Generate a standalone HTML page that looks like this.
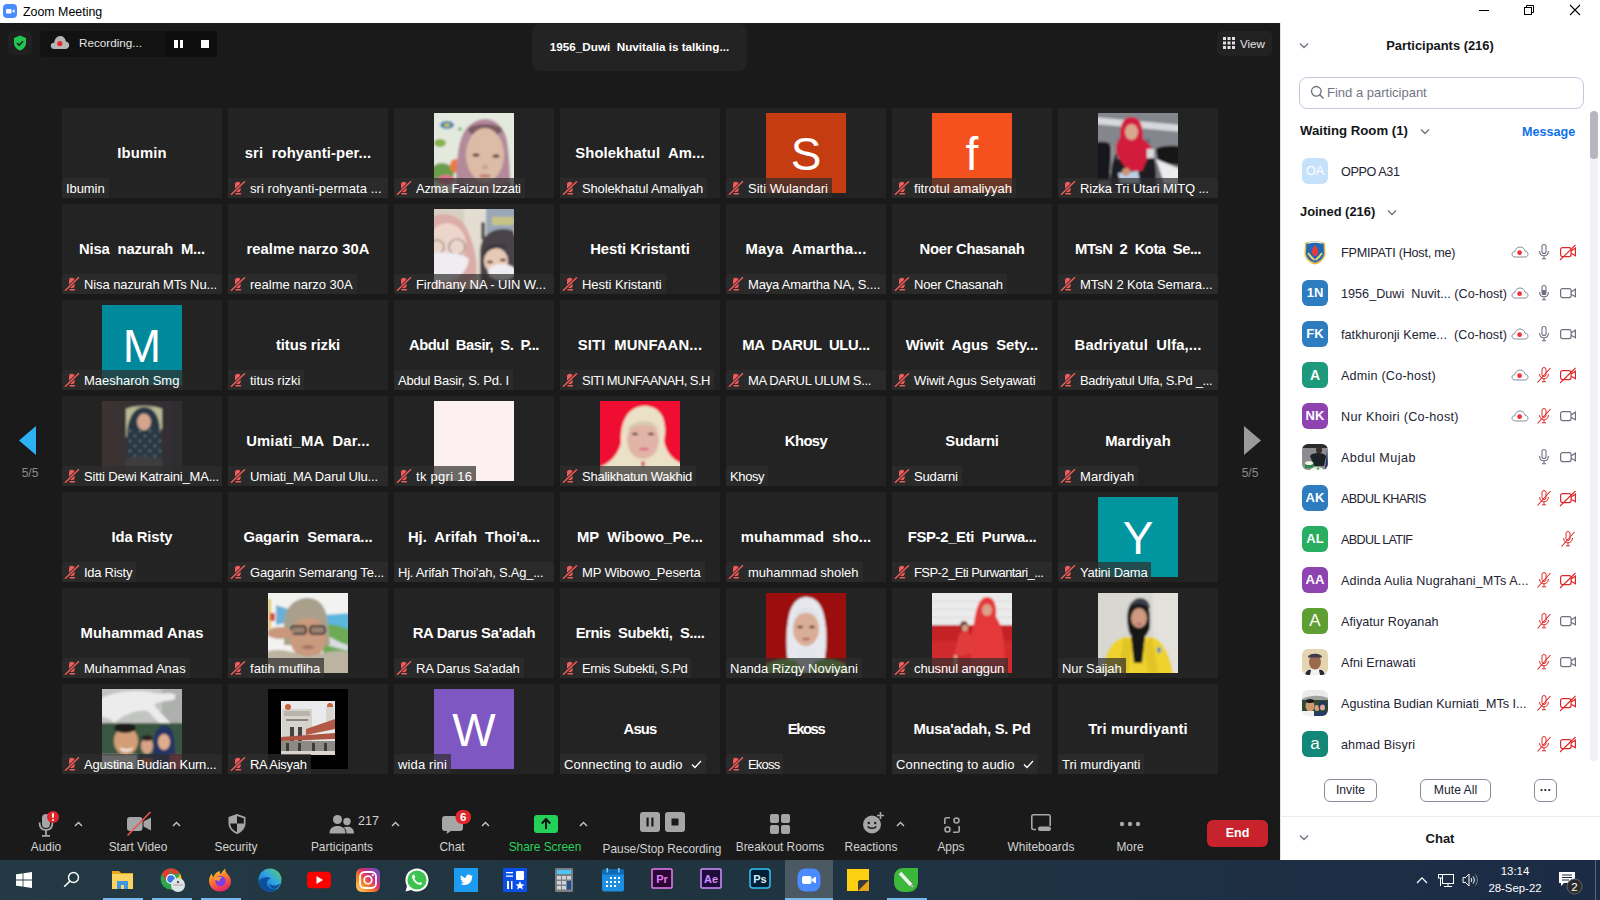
<!DOCTYPE html><html><head><meta charset="utf-8"><title>Zoom Meeting</title><style>
*{box-sizing:border-box;margin:0;padding:0}
html,body{width:1600px;height:900px;overflow:hidden;background:#1a1a1a;font-family:"Liberation Sans",sans-serif}
.a{position:absolute}
.tile{position:absolute;width:160px;height:90px;background:#232323;overflow:hidden}
.big{position:absolute;left:0;top:0;width:160px;height:90px;line-height:90px;text-align:center;color:#fff;font-weight:bold;font-size:14.8px;white-space:pre;letter-spacing:0}
.lbl{position:absolute;left:0;bottom:0;height:20px;background:rgba(46,46,46,0.7);color:#fff;font-size:13px;line-height:21px;white-space:pre;padding:0 4px 0 4px;max-width:160px;overflow:hidden}
.lbl.m{padding-left:22px}.lbl.f{width:160px}
.mic{position:absolute;left:0;top:0;width:24px;height:20px}
.av{position:absolute;left:40px;top:5px;width:80px;height:80px;color:#fff;text-align:center;font-size:46px;line-height:82px}
.ph{position:absolute;left:40px;top:5px;width:80px;height:80px;overflow:hidden;display:block}
.tb{position:absolute;color:#c9c9c9;font-size:11.9px;text-align:center;white-space:nowrap}
.pr{position:absolute;left:1300px;width:280px;height:41px}
.pav{position:absolute;left:2px;top:7px;width:26px;height:26px;border-radius:6px;color:#fff;font-weight:bold;font-size:14px;line-height:26px;text-align:center;overflow:hidden}
.pn{position:absolute;left:41px;top:0;line-height:41px;font-size:13.5px;color:#232333;white-space:nowrap}
.ti{position:absolute;top:0;width:49px;height:40px}
</style></head><body>
<div class="a" style="left:0;top:0;width:1600px;height:23px;background:#fff"></div>
<div class="a" style="left:3px;top:4px;width:14px;height:14px;border-radius:4px;background:#4a8cff"></div>
<svg class="a" style="left:3px;top:4px" width="14" height="14" viewBox="0 0 14 14"><rect x="3" y="5" width="5.5" height="4.5" rx="1" fill="#fff"/><path d="M9 7 L11.5 5.3 V9.2 Z" fill="#fff"/></svg>
<div class="a" style="left:23px;top:4px;font-size:12.4px;line-height:17px;color:#000">Zoom Meeting</div>
<div class="a" style="left:1479px;top:10px;width:10px;height:1px;background:#000"></div>
<svg class="a" style="left:1523px;top:4px" width="12" height="12" viewBox="0 0 12 12"><rect x="1.5" y="3.5" width="7" height="7" fill="none" stroke="#000"/><path d="M3.5 3.5 V1.5 H10.5 V8.5 H8.5" fill="none" stroke="#000"/></svg>
<svg class="a" style="left:1569px;top:4px" width="12" height="12" viewBox="0 0 12 12"><path d="M1 1 L11 11 M11 1 L1 11" stroke="#000" stroke-width="1.1"/></svg>
<div class="a" style="left:8px;top:31px;width:24px;height:24px;border-radius:5px;background:#202020"></div>
<svg class="a" style="left:13px;top:35px" width="14" height="16" viewBox="0 0 14 16"><path d="M7 0.5 L13 3 V8 C13 11.5 10.5 14 7 15.5 C3.5 14 1 11.5 1 8 V3 Z" fill="#23c552"/><path d="M4 8 L6.2 10.2 L10 6.3" stroke="#1a1a1a" stroke-width="1.6" fill="none"/></svg>
<div class="a" style="left:40px;top:31px;width:177px;height:26px;border-radius:4px;background:#121212"></div>
<svg class="a" style="left:50px;top:35px" width="20" height="15" viewBox="0 0 20 15"><path d="M4.5 14 C1.5 14 0.5 12 0.8 10.2 C1.2 8.3 3 7.6 4.2 7.8 C4.5 4 7 1 10.2 1 C13.5 1 15.6 3.6 15.9 6.6 C18 6.9 19.4 8.6 19.2 10.6 C19 12.6 17.5 14 15.4 14 Z" fill="#b5b5b5"/><circle cx="9.8" cy="8.5" r="2.6" fill="#e8262b"/></svg>
<div class="a" style="left:79px;top:34px;font-size:11.7px;line-height:18px;color:#e6e6e6">Recording...</div>
<div class="a" style="left:165px;top:31px;width:52px;height:26px;border-radius:0 4px 4px 0;background:#0e0e0e"></div>
<div class="a" style="left:174px;top:40px;width:3.5px;height:8px;background:#fff"></div><div class="a" style="left:179.5px;top:40px;width:3.5px;height:8px;background:#fff"></div>
<div class="a" style="left:201px;top:40px;width:8px;height:8px;background:#fff"></div>
<div class="a" style="left:532px;top:24px;width:215px;height:47px;border-radius:8px;background:#232323"></div>
<div class="a" style="left:532px;top:38px;width:215px;text-align:center;font-size:11.7px;font-weight:bold;line-height:18px;color:#fff">1956_Duwi&nbsp; Nuvitalia is talking...</div>
<div class="a" style="left:1217px;top:31px;width:55px;height:25px;border-radius:5px;background:#222"></div>
<svg class="a" style="left:1223px;top:37px" width="12" height="12" viewBox="0 0 12 12" fill="#e0e0e0"><rect x="0" y="0" width="3" height="3"/><rect x="4.5" y="0" width="3" height="3"/><rect x="9" y="0" width="3" height="3"/><rect x="0" y="4.5" width="3" height="3"/><rect x="4.5" y="4.5" width="3" height="3"/><rect x="9" y="4.5" width="3" height="3"/><rect x="0" y="9" width="3" height="3"/><rect x="4.5" y="9" width="3" height="3"/><rect x="9" y="9" width="3" height="3"/></svg>
<div class="a" style="left:1240px;top:35px;font-size:11.6px;line-height:18px;color:#e6e6e6">View</div>
<svg class="a" style="left:19px;top:426px" width="18" height="29" viewBox="0 0 18 29"><path d="M17 0 V29 L0 14.5 Z" fill="#2db2f6"/></svg>
<div class="a" style="left:14px;top:466px;width:32px;text-align:center;font-size:12px;line-height:14px;color:#8a8a8a">5/5</div>
<svg class="a" style="left:1244px;top:426px" width="18" height="29" viewBox="0 0 18 29"><path d="M0 0 V29 L17 14.5 Z" fill="#9a9a9a"/></svg>
<div class="a" style="left:1234px;top:466px;width:32px;text-align:center;font-size:12px;line-height:14px;color:#8a8a8a">5/5</div>
<div class="tile" style="left:62px;top:108px"><div class="big" style="letter-spacing:0.20px">Ibumin</div><div class="lbl"><span style="letter-spacing:-0.08px">Ibumin</span></div></div>
<div class="tile" style="left:228px;top:108px"><div class="big" style="letter-spacing:0.12px">sri  rohyanti-per...</div><div class="lbl m f"><svg class="mic" viewBox="0 0 24 20"><rect x="7" y="3.7" width="5.6" height="10.6" rx="2.8" fill="#f05a5a"/><rect x="7.2" y="15" width="6" height="1.6" rx=".8" fill="#f05a5a"/><path d="M3 16.7 L17 3.3" stroke="#2a2a2a" stroke-width="3"/><path d="M3 16.7 L17 3.3" stroke="#f05a5a" stroke-width="1.5"/></svg><span style="letter-spacing:0.07px">sri rohyanti-permata ...</span></div></div>
<div class="tile" style="left:394px;top:108px"><svg class="ph" viewBox="0 0 80 80" width="80" height="80"><defs><filter id="b1" x="-10%" y="-10%" width="120%" height="120%"><feGaussianBlur stdDeviation="1.1"/></filter><clipPath id="c1"><rect width="80" height="80"/></clipPath></defs><g clip-path="url(#c1)"><g filter="url(#b1)">
<rect x="-5" y="-5" width="90" height="90" fill="#e4e9de"/>
<ellipse cx="13" cy="12" rx="7" ry="4" fill="#3f82b8"/><ellipse cx="13" cy="12" rx="3" ry="2" fill="#c9c34a"/>
<ellipse cx="26" cy="16" rx="2" ry="1.5" fill="#6aa86a"/>
<ellipse cx="6" cy="30" rx="6" ry="4" fill="#86b24a"/>
<ellipse cx="8" cy="60" rx="12" ry="10" fill="#6a9e4c"/>
<ellipse cx="21" cy="53" rx="5" ry="7" fill="#ea7a3e"/>
<ellipse cx="12" cy="67" rx="9" ry="5" fill="#e47092"/>
<path d="M22 80 C22 58 23 38 27 26 C31 13 41 6 52 6 C65 7 73 18 74 35 C76 52 76 68 77 80 Z" fill="#b48a9b"/>
<ellipse cx="51" cy="17" rx="17" ry="6" fill="#7a5c63"/>
<ellipse cx="51" cy="42" rx="19" ry="27" fill="#dcbca6"/>
<ellipse cx="42" cy="42" rx="3.5" ry="1.6" fill="#4b3329"/><ellipse cx="62" cy="43" rx="3.5" ry="1.6" fill="#4b3329"/>
<ellipse cx="51" cy="54" rx="3" ry="2" fill="#c9a08a"/>
<ellipse cx="51" cy="63" rx="6" ry="2" fill="#c48479"/>
<path d="M20 80 L24 68 C34 74 44 76 52 76 C62 76 70 72 76 68 L78 80 Z" fill="#8f6d7a"/>
</g></g></svg><div class="lbl m"><svg class="mic" viewBox="0 0 24 20"><rect x="7" y="3.7" width="5.6" height="10.6" rx="2.8" fill="#f05a5a"/><rect x="7.2" y="15" width="6" height="1.6" rx=".8" fill="#f05a5a"/><path d="M3 16.7 L17 3.3" stroke="#2a2a2a" stroke-width="3"/><path d="M3 16.7 L17 3.3" stroke="#f05a5a" stroke-width="1.5"/></svg><span style="letter-spacing:-0.29px">Azma Faizun Izzati</span></div></div>
<div class="tile" style="left:560px;top:108px"><div class="big" style="letter-spacing:0.09px">Sholekhatul  Am...</div><div class="lbl m"><svg class="mic" viewBox="0 0 24 20"><rect x="7" y="3.7" width="5.6" height="10.6" rx="2.8" fill="#f05a5a"/><rect x="7.2" y="15" width="6" height="1.6" rx=".8" fill="#f05a5a"/><path d="M3 16.7 L17 3.3" stroke="#2a2a2a" stroke-width="3"/><path d="M3 16.7 L17 3.3" stroke="#f05a5a" stroke-width="1.5"/></svg><span style="letter-spacing:-0.16px">Sholekhatul Amaliyah</span></div></div>
<div class="tile" style="left:726px;top:108px"><div class="av" style="background:#c43c0f">S</div><div class="lbl m"><svg class="mic" viewBox="0 0 24 20"><rect x="7" y="3.7" width="5.6" height="10.6" rx="2.8" fill="#f05a5a"/><rect x="7.2" y="15" width="6" height="1.6" rx=".8" fill="#f05a5a"/><path d="M3 16.7 L17 3.3" stroke="#2a2a2a" stroke-width="3"/><path d="M3 16.7 L17 3.3" stroke="#f05a5a" stroke-width="1.5"/></svg><span style="letter-spacing:-0.00px">Siti Wulandari</span></div></div>
<div class="tile" style="left:892px;top:108px"><div class="av" style="background:#f4511e">f</div><div class="lbl m"><svg class="mic" viewBox="0 0 24 20"><rect x="7" y="3.7" width="5.6" height="10.6" rx="2.8" fill="#f05a5a"/><rect x="7.2" y="15" width="6" height="1.6" rx=".8" fill="#f05a5a"/><path d="M3 16.7 L17 3.3" stroke="#2a2a2a" stroke-width="3"/><path d="M3 16.7 L17 3.3" stroke="#f05a5a" stroke-width="1.5"/></svg><span style="letter-spacing:0.03px">fitrotul amaliyyah</span></div></div>
<div class="tile" style="left:1058px;top:108px"><svg class="ph" viewBox="0 0 80 80" width="80" height="80"><defs><filter id="b2" x="-10%" y="-10%" width="120%" height="120%"><feGaussianBlur stdDeviation="1.1"/></filter><clipPath id="c2"><rect width="80" height="80"/></clipPath></defs><g clip-path="url(#c2)"><g filter="url(#b2)">
<rect x="-5" y="-5" width="90" height="90" fill="#84868d"/>
<path d="M-5 4 L85 12 L85 19 L-5 11 Z" fill="#d7d8dc"/>
<rect x="-5" y="50" width="90" height="35" fill="#707177"/>
<path d="M-3 30 C2 28 10 28 13 32 L13 68 L-3 68 Z" fill="#17171b"/>
<path d="M12 32 L14 34 L12 68" stroke="#aaa" stroke-width="1" fill="none"/>
<path d="M58 36 C62 32 80 32 85 34 L85 52 L60 50 Z" fill="#141417"/>
<path d="M58 46 L82 56 L85 72 L66 70 Z" fill="#ebebed"/>
<path d="M12 80 C12 50 16 36 30 32 L48 32 C58 36 58 55 58 80 Z" fill="#1b1b20"/>
<rect x="19" y="26" width="8" height="20" fill="#6b6d78"/><rect x="45" y="26" width="7" height="20" fill="#6b6d78"/>
<path d="M22 24 C22 12 25 4 33 4 C42 4 45 12 45 26 C52 32 55 36 56 38 C50 42 47 52 44 58 L30 58 C24 50 18 42 18 36 C18 30 21 28 22 24 Z" fill="#d31a3c"/>
<ellipse cx="33.5" cy="19" rx="6.5" ry="8" fill="#d9a98f"/>
<rect x="49" y="36" width="7" height="9" fill="#d8d8dc"/>
<path d="M20 60 L40 58 L42 70 L22 70 Z" fill="#b9cfe6"/>
<ellipse cx="28" cy="59" rx="4" ry="4" fill="#c9967a"/>
</g></g></svg><div class="lbl m f"><svg class="mic" viewBox="0 0 24 20"><rect x="7" y="3.7" width="5.6" height="10.6" rx="2.8" fill="#f05a5a"/><rect x="7.2" y="15" width="6" height="1.6" rx=".8" fill="#f05a5a"/><path d="M3 16.7 L17 3.3" stroke="#2a2a2a" stroke-width="3"/><path d="M3 16.7 L17 3.3" stroke="#f05a5a" stroke-width="1.5"/></svg><span style="letter-spacing:-0.14px">Rizka Tri Utari MITQ ...</span></div></div>
<div class="tile" style="left:62px;top:204px"><div class="big" style="letter-spacing:-0.17px">Nisa  nazurah  M...</div><div class="lbl m f"><svg class="mic" viewBox="0 0 24 20"><rect x="7" y="3.7" width="5.6" height="10.6" rx="2.8" fill="#f05a5a"/><rect x="7.2" y="15" width="6" height="1.6" rx=".8" fill="#f05a5a"/><path d="M3 16.7 L17 3.3" stroke="#2a2a2a" stroke-width="3"/><path d="M3 16.7 L17 3.3" stroke="#f05a5a" stroke-width="1.5"/></svg><span style="letter-spacing:-0.09px">Nisa nazurah MTs Nu...</span></div></div>
<div class="tile" style="left:228px;top:204px"><div class="big" style="letter-spacing:0.02px">realme narzo 30A</div><div class="lbl m"><svg class="mic" viewBox="0 0 24 20"><rect x="7" y="3.7" width="5.6" height="10.6" rx="2.8" fill="#f05a5a"/><rect x="7.2" y="15" width="6" height="1.6" rx=".8" fill="#f05a5a"/><path d="M3 16.7 L17 3.3" stroke="#2a2a2a" stroke-width="3"/><path d="M3 16.7 L17 3.3" stroke="#f05a5a" stroke-width="1.5"/></svg><span style="letter-spacing:0.01px">realme narzo 30A</span></div></div>
<div class="tile" style="left:394px;top:204px"><svg class="ph" viewBox="0 0 80 80" width="80" height="80"><defs><filter id="b3" x="-10%" y="-10%" width="120%" height="120%"><feGaussianBlur stdDeviation="1.1"/></filter><clipPath id="c3"><rect width="80" height="80"/></clipPath></defs><g clip-path="url(#c3)"><g filter="url(#b3)">
<rect x="-5" y="-5" width="90" height="90" fill="#d8cfc4"/>
<rect x="30" y="-5" width="22" height="70" fill="#e4ddd2"/>
<rect x="52" y="-5" width="33" height="30" fill="#9aa7b6"/>
<rect x="58" y="8" width="22" height="8" fill="#c9c486"/>
<rect x="47" y="13" width="4" height="18" rx="2" fill="#555"/>
<path d="M-5 10 C6 2 24 4 32 18 C40 34 44 52 42 68 L36 85 L-5 85 Z" fill="#dcaca8"/>
<ellipse cx="13" cy="36" rx="19" ry="22" fill="#ecd6cb"/>
<circle cx="23" cy="38" r="8" fill="none" stroke="#8a7b7a" stroke-width="1.2"/>
<circle cx="3" cy="38" r="7" fill="none" stroke="#8a7b7a" stroke-width="1.2"/>
<path d="M-5 44 C10 42 28 44 35 50 C33 62 26 70 14 72 L-5 72 Z" fill="#efedf2"/>
<path d="M46 44 C46 28 56 20 70 20 C80 20 85 26 85 34 L85 85 L48 85 C46 70 46 56 46 44 Z" fill="#48434a"/>
<ellipse cx="62" cy="52" rx="12" ry="13" fill="#e8c9b6"/>
<path d="M50 42 C54 36 62 34 70 36 L74 40 C66 38 56 38 50 46 Z" fill="#3a3438"/>
<ellipse cx="56" cy="53" rx="3" ry="1.3" fill="#2a1c1c"/><ellipse cx="69" cy="51" rx="3" ry="1.3" fill="#2a1c1c"/>
<ellipse cx="68" cy="63" rx="14" ry="8" fill="#efedf1"/>
<rect x="80" y="20" width="5" height="6" fill="#e3b9a6"/>
</g></g></svg><div class="lbl m f"><svg class="mic" viewBox="0 0 24 20"><rect x="7" y="3.7" width="5.6" height="10.6" rx="2.8" fill="#f05a5a"/><rect x="7.2" y="15" width="6" height="1.6" rx=".8" fill="#f05a5a"/><path d="M3 16.7 L17 3.3" stroke="#2a2a2a" stroke-width="3"/><path d="M3 16.7 L17 3.3" stroke="#f05a5a" stroke-width="1.5"/></svg><span style="letter-spacing:-0.07px">Firdhany NA - UIN W...</span></div></div>
<div class="tile" style="left:560px;top:204px"><div class="big" style="letter-spacing:-0.05px">Hesti Kristanti</div><div class="lbl m"><svg class="mic" viewBox="0 0 24 20"><rect x="7" y="3.7" width="5.6" height="10.6" rx="2.8" fill="#f05a5a"/><rect x="7.2" y="15" width="6" height="1.6" rx=".8" fill="#f05a5a"/><path d="M3 16.7 L17 3.3" stroke="#2a2a2a" stroke-width="3"/><path d="M3 16.7 L17 3.3" stroke="#f05a5a" stroke-width="1.5"/></svg><span style="letter-spacing:-0.04px">Hesti Kristanti</span></div></div>
<div class="tile" style="left:726px;top:204px"><div class="big" style="letter-spacing:0.25px">Maya  Amartha...</div><div class="lbl m f"><svg class="mic" viewBox="0 0 24 20"><rect x="7" y="3.7" width="5.6" height="10.6" rx="2.8" fill="#f05a5a"/><rect x="7.2" y="15" width="6" height="1.6" rx=".8" fill="#f05a5a"/><path d="M3 16.7 L17 3.3" stroke="#2a2a2a" stroke-width="3"/><path d="M3 16.7 L17 3.3" stroke="#f05a5a" stroke-width="1.5"/></svg><span style="letter-spacing:-0.17px">Maya Amartha NA, S....</span></div></div>
<div class="tile" style="left:892px;top:204px"><div class="big" style="letter-spacing:-0.29px">Noer Chasanah</div><div class="lbl m"><svg class="mic" viewBox="0 0 24 20"><rect x="7" y="3.7" width="5.6" height="10.6" rx="2.8" fill="#f05a5a"/><rect x="7.2" y="15" width="6" height="1.6" rx=".8" fill="#f05a5a"/><path d="M3 16.7 L17 3.3" stroke="#2a2a2a" stroke-width="3"/><path d="M3 16.7 L17 3.3" stroke="#f05a5a" stroke-width="1.5"/></svg><span style="letter-spacing:-0.17px">Noer Chasanah</span></div></div>
<div class="tile" style="left:1058px;top:204px"><div class="big" style="letter-spacing:-0.48px">MTsN  2  Kota  Se...</div><div class="lbl m f"><svg class="mic" viewBox="0 0 24 20"><rect x="7" y="3.7" width="5.6" height="10.6" rx="2.8" fill="#f05a5a"/><rect x="7.2" y="15" width="6" height="1.6" rx=".8" fill="#f05a5a"/><path d="M3 16.7 L17 3.3" stroke="#2a2a2a" stroke-width="3"/><path d="M3 16.7 L17 3.3" stroke="#f05a5a" stroke-width="1.5"/></svg><span style="letter-spacing:-0.09px">MTsN 2 Kota Semara...</span></div></div>
<div class="tile" style="left:62px;top:300px"><div class="av" style="background:#00899b">M</div><div class="lbl m"><svg class="mic" viewBox="0 0 24 20"><rect x="7" y="3.7" width="5.6" height="10.6" rx="2.8" fill="#f05a5a"/><rect x="7.2" y="15" width="6" height="1.6" rx=".8" fill="#f05a5a"/><path d="M3 16.7 L17 3.3" stroke="#2a2a2a" stroke-width="3"/><path d="M3 16.7 L17 3.3" stroke="#f05a5a" stroke-width="1.5"/></svg><span style="letter-spacing:0.00px">Maesharoh Smg</span></div></div>
<div class="tile" style="left:228px;top:300px"><div class="big" style="letter-spacing:-0.07px">titus rizki</div><div class="lbl m"><svg class="mic" viewBox="0 0 24 20"><rect x="7" y="3.7" width="5.6" height="10.6" rx="2.8" fill="#f05a5a"/><rect x="7.2" y="15" width="6" height="1.6" rx=".8" fill="#f05a5a"/><path d="M3 16.7 L17 3.3" stroke="#2a2a2a" stroke-width="3"/><path d="M3 16.7 L17 3.3" stroke="#f05a5a" stroke-width="1.5"/></svg><span style="letter-spacing:-0.02px">titus rizki</span></div></div>
<div class="tile" style="left:394px;top:300px"><div class="big" style="letter-spacing:-0.49px">Abdul  Basir,  S.  P...</div><div class="lbl"><span style="letter-spacing:-0.22px">Abdul Basir, S. Pd. I</span></div></div>
<div class="tile" style="left:560px;top:300px"><div class="big" style="letter-spacing:0.17px">SITI  MUNFAAN...</div><div class="lbl m"><svg class="mic" viewBox="0 0 24 20"><rect x="7" y="3.7" width="5.6" height="10.6" rx="2.8" fill="#f05a5a"/><rect x="7.2" y="15" width="6" height="1.6" rx=".8" fill="#f05a5a"/><path d="M3 16.7 L17 3.3" stroke="#2a2a2a" stroke-width="3"/><path d="M3 16.7 L17 3.3" stroke="#f05a5a" stroke-width="1.5"/></svg><span style="letter-spacing:-0.53px">SITI MUNFAANAH, S.H</span></div></div>
<div class="tile" style="left:726px;top:300px"><div class="big" style="letter-spacing:-0.34px">MA  DARUL  ULU...</div><div class="lbl m f"><svg class="mic" viewBox="0 0 24 20"><rect x="7" y="3.7" width="5.6" height="10.6" rx="2.8" fill="#f05a5a"/><rect x="7.2" y="15" width="6" height="1.6" rx=".8" fill="#f05a5a"/><path d="M3 16.7 L17 3.3" stroke="#2a2a2a" stroke-width="3"/><path d="M3 16.7 L17 3.3" stroke="#f05a5a" stroke-width="1.5"/></svg><span style="letter-spacing:-0.37px">MA DARUL ULUM S...</span></div></div>
<div class="tile" style="left:892px;top:300px"><div class="big" style="letter-spacing:-0.08px">Wiwit  Agus  Sety...</div><div class="lbl m"><svg class="mic" viewBox="0 0 24 20"><rect x="7" y="3.7" width="5.6" height="10.6" rx="2.8" fill="#f05a5a"/><rect x="7.2" y="15" width="6" height="1.6" rx=".8" fill="#f05a5a"/><path d="M3 16.7 L17 3.3" stroke="#2a2a2a" stroke-width="3"/><path d="M3 16.7 L17 3.3" stroke="#f05a5a" stroke-width="1.5"/></svg><span style="letter-spacing:-0.10px">Wiwit Agus Setyawati</span></div></div>
<div class="tile" style="left:1058px;top:300px"><div class="big" style="letter-spacing:0.09px">Badriyatul  Ulfa,...</div><div class="lbl m f"><svg class="mic" viewBox="0 0 24 20"><rect x="7" y="3.7" width="5.6" height="10.6" rx="2.8" fill="#f05a5a"/><rect x="7.2" y="15" width="6" height="1.6" rx=".8" fill="#f05a5a"/><path d="M3 16.7 L17 3.3" stroke="#2a2a2a" stroke-width="3"/><path d="M3 16.7 L17 3.3" stroke="#f05a5a" stroke-width="1.5"/></svg><span style="letter-spacing:-0.36px">Badriyatul Ulfa, S.Pd _...</span></div></div>
<div class="tile" style="left:62px;top:396px"><svg class="ph" viewBox="0 0 80 80" width="80" height="80"><defs><filter id="b4" x="-10%" y="-10%" width="120%" height="120%"><feGaussianBlur stdDeviation="1.1"/></filter><clipPath id="c4"><rect width="80" height="80"/></clipPath></defs><g clip-path="url(#c4)"><g filter="url(#b4)">
<defs><linearGradient id="sg" x1="0" x2="1"><stop offset="0" stop-color="#3f3330"/><stop offset=".5" stop-color="#333031"/><stop offset="1" stop-color="#2e2f31"/></linearGradient></defs>
<rect x="-5" y="-5" width="90" height="90" fill="url(#sg)"/>
<path d="M24 8 C30 4 54 4 60 8 L60 28 L24 36 Z" fill="#b9ba96"/>
<path d="M25 36 C25 16 33 6 42 6 C52 6 58 16 58 30 C60 45 61 58 58 66 L27 66 C25 56 24 46 25 36 Z" fill="#2c3944"/>
<ellipse cx="42" cy="21" rx="7" ry="8.5" fill="#d3a68d"/>
<g fill="#9fb4c4" opacity=".7"><circle cx="28" cy="30" r="0.9"/><circle cx="28" cy="40" r="0.9"/><circle cx="28" cy="50" r="0.9"/><circle cx="28" cy="60" r="0.9"/><circle cx="33" cy="35" r="0.9"/><circle cx="33" cy="45" r="0.9"/><circle cx="33" cy="55" r="0.9"/><circle cx="33" cy="65" r="0.9"/><circle cx="38" cy="30" r="0.9"/><circle cx="38" cy="40" r="0.9"/><circle cx="38" cy="50" r="0.9"/><circle cx="38" cy="60" r="0.9"/><circle cx="43" cy="35" r="0.9"/><circle cx="43" cy="45" r="0.9"/><circle cx="43" cy="55" r="0.9"/><circle cx="43" cy="65" r="0.9"/><circle cx="48" cy="30" r="0.9"/><circle cx="48" cy="40" r="0.9"/><circle cx="48" cy="50" r="0.9"/><circle cx="48" cy="60" r="0.9"/><circle cx="53" cy="35" r="0.9"/><circle cx="53" cy="45" r="0.9"/><circle cx="53" cy="55" r="0.9"/><circle cx="53" cy="65" r="0.9"/><circle cx="58" cy="30" r="0.9"/><circle cx="58" cy="40" r="0.9"/><circle cx="58" cy="50" r="0.9"/><circle cx="58" cy="60" r="0.9"/></g>
<path d="M22 80 L24 58 C30 54 52 54 60 58 L62 80 Z" fill="#3e3d40"/>
</g></g></svg><div class="lbl m f"><svg class="mic" viewBox="0 0 24 20"><rect x="7" y="3.7" width="5.6" height="10.6" rx="2.8" fill="#f05a5a"/><rect x="7.2" y="15" width="6" height="1.6" rx=".8" fill="#f05a5a"/><path d="M3 16.7 L17 3.3" stroke="#2a2a2a" stroke-width="3"/><path d="M3 16.7 L17 3.3" stroke="#f05a5a" stroke-width="1.5"/></svg><span style="letter-spacing:-0.18px">Sitti Dewi Katraini_MA...</span></div></div>
<div class="tile" style="left:228px;top:396px"><div class="big" style="letter-spacing:0.20px">Umiati_MA  Dar...</div><div class="lbl m f"><svg class="mic" viewBox="0 0 24 20"><rect x="7" y="3.7" width="5.6" height="10.6" rx="2.8" fill="#f05a5a"/><rect x="7.2" y="15" width="6" height="1.6" rx=".8" fill="#f05a5a"/><path d="M3 16.7 L17 3.3" stroke="#2a2a2a" stroke-width="3"/><path d="M3 16.7 L17 3.3" stroke="#f05a5a" stroke-width="1.5"/></svg><span style="letter-spacing:-0.16px">Umiati_MA Darul Ulu...</span></div></div>
<div class="tile" style="left:394px;top:396px"><div class="ph" style="background:#fdf0f0"></div><div class="lbl m"><svg class="mic" viewBox="0 0 24 20"><rect x="7" y="3.7" width="5.6" height="10.6" rx="2.8" fill="#f05a5a"/><rect x="7.2" y="15" width="6" height="1.6" rx=".8" fill="#f05a5a"/><path d="M3 16.7 L17 3.3" stroke="#2a2a2a" stroke-width="3"/><path d="M3 16.7 L17 3.3" stroke="#f05a5a" stroke-width="1.5"/></svg><span style="letter-spacing:0.28px">tk pgri 16</span></div></div>
<div class="tile" style="left:560px;top:396px"><svg class="ph" viewBox="0 0 80 80" width="80" height="80"><defs><filter id="b5" x="-10%" y="-10%" width="120%" height="120%"><feGaussianBlur stdDeviation="1.1"/></filter><clipPath id="c5"><rect width="80" height="80"/></clipPath></defs><g clip-path="url(#c5)"><g filter="url(#b5)">
<rect x="-5" y="-5" width="90" height="90" fill="#ef0a33"/>
<path d="M0 66 C10 62 18 54 21 42 C20 16 31 5 45 5 C60 5 68 18 64 40 C66 52 74 60 85 64 L85 85 L0 85 Z" fill="#ebe1c8"/>
<ellipse cx="43" cy="39" rx="16" ry="19" fill="#e1b4a7"/>
<path d="M26 30 C30 22 38 20 44 20 C52 20 58 24 60 30 C56 26 50 24 44 24 C36 24 30 26 26 30 Z" fill="#d9cdb0"/>
<ellipse cx="35" cy="33" rx="3" ry="1.3" fill="#4a3530"/><ellipse cx="51" cy="33" rx="3" ry="1.3" fill="#4a3530"/>
<ellipse cx="44" cy="48" rx="5" ry="1.6" fill="#d9738a"/>
<ellipse cx="43" cy="63" rx="2" ry="3" fill="#d46a6a"/>
</g></g></svg><div class="lbl m"><svg class="mic" viewBox="0 0 24 20"><rect x="7" y="3.7" width="5.6" height="10.6" rx="2.8" fill="#f05a5a"/><rect x="7.2" y="15" width="6" height="1.6" rx=".8" fill="#f05a5a"/><path d="M3 16.7 L17 3.3" stroke="#2a2a2a" stroke-width="3"/><path d="M3 16.7 L17 3.3" stroke="#f05a5a" stroke-width="1.5"/></svg><span style="letter-spacing:-0.24px">Shalikhatun Wakhid</span></div></div>
<div class="tile" style="left:726px;top:396px"><div class="big" style="letter-spacing:-0.56px">Khosy</div><div class="lbl"><span style="letter-spacing:-0.38px">Khosy</span></div></div>
<div class="tile" style="left:892px;top:396px"><div class="big" style="letter-spacing:-0.23px">Sudarni</div><div class="lbl m"><svg class="mic" viewBox="0 0 24 20"><rect x="7" y="3.7" width="5.6" height="10.6" rx="2.8" fill="#f05a5a"/><rect x="7.2" y="15" width="6" height="1.6" rx=".8" fill="#f05a5a"/><path d="M3 16.7 L17 3.3" stroke="#2a2a2a" stroke-width="3"/><path d="M3 16.7 L17 3.3" stroke="#f05a5a" stroke-width="1.5"/></svg><span style="letter-spacing:-0.15px">Sudarni</span></div></div>
<div class="tile" style="left:1058px;top:396px"><div class="big" style="letter-spacing:0.08px">Mardiyah</div><div class="lbl m"><svg class="mic" viewBox="0 0 24 20"><rect x="7" y="3.7" width="5.6" height="10.6" rx="2.8" fill="#f05a5a"/><rect x="7.2" y="15" width="6" height="1.6" rx=".8" fill="#f05a5a"/><path d="M3 16.7 L17 3.3" stroke="#2a2a2a" stroke-width="3"/><path d="M3 16.7 L17 3.3" stroke="#f05a5a" stroke-width="1.5"/></svg><span style="letter-spacing:0.10px">Mardiyah</span></div></div>
<div class="tile" style="left:62px;top:492px"><div class="big" style="letter-spacing:-0.07px">Ida Risty</div><div class="lbl m"><svg class="mic" viewBox="0 0 24 20"><rect x="7" y="3.7" width="5.6" height="10.6" rx="2.8" fill="#f05a5a"/><rect x="7.2" y="15" width="6" height="1.6" rx=".8" fill="#f05a5a"/><path d="M3 16.7 L17 3.3" stroke="#2a2a2a" stroke-width="3"/><path d="M3 16.7 L17 3.3" stroke="#f05a5a" stroke-width="1.5"/></svg><span style="letter-spacing:-0.27px">Ida Risty</span></div></div>
<div class="tile" style="left:228px;top:492px"><div class="big" style="letter-spacing:-0.05px">Gagarin  Semara...</div><div class="lbl m f"><svg class="mic" viewBox="0 0 24 20"><rect x="7" y="3.7" width="5.6" height="10.6" rx="2.8" fill="#f05a5a"/><rect x="7.2" y="15" width="6" height="1.6" rx=".8" fill="#f05a5a"/><path d="M3 16.7 L17 3.3" stroke="#2a2a2a" stroke-width="3"/><path d="M3 16.7 L17 3.3" stroke="#f05a5a" stroke-width="1.5"/></svg><span style="letter-spacing:-0.17px">Gagarin Semarang Te...</span></div></div>
<div class="tile" style="left:394px;top:492px"><div class="big" style="letter-spacing:-0.03px">Hj.  Arifah  Thoi&#x27;a...</div><div class="lbl f"><span style="letter-spacing:-0.23px">Hj. Arifah Thoi&#x27;ah, S.Ag_...</span></div></div>
<div class="tile" style="left:560px;top:492px"><div class="big" style="letter-spacing:0.04px">MP  Wibowo_Pe...</div><div class="lbl m"><svg class="mic" viewBox="0 0 24 20"><rect x="7" y="3.7" width="5.6" height="10.6" rx="2.8" fill="#f05a5a"/><rect x="7.2" y="15" width="6" height="1.6" rx=".8" fill="#f05a5a"/><path d="M3 16.7 L17 3.3" stroke="#2a2a2a" stroke-width="3"/><path d="M3 16.7 L17 3.3" stroke="#f05a5a" stroke-width="1.5"/></svg><span style="letter-spacing:-0.15px">MP Wibowo_Peserta</span></div></div>
<div class="tile" style="left:726px;top:492px"><div class="big" style="letter-spacing:0.03px">muhammad  sho...</div><div class="lbl m"><svg class="mic" viewBox="0 0 24 20"><rect x="7" y="3.7" width="5.6" height="10.6" rx="2.8" fill="#f05a5a"/><rect x="7.2" y="15" width="6" height="1.6" rx=".8" fill="#f05a5a"/><path d="M3 16.7 L17 3.3" stroke="#2a2a2a" stroke-width="3"/><path d="M3 16.7 L17 3.3" stroke="#f05a5a" stroke-width="1.5"/></svg><span style="letter-spacing:0.00px">muhammad sholeh</span></div></div>
<div class="tile" style="left:892px;top:492px"><div class="big" style="letter-spacing:-0.28px">FSP-2_Eti  Purwa...</div><div class="lbl m f"><svg class="mic" viewBox="0 0 24 20"><rect x="7" y="3.7" width="5.6" height="10.6" rx="2.8" fill="#f05a5a"/><rect x="7.2" y="15" width="6" height="1.6" rx=".8" fill="#f05a5a"/><path d="M3 16.7 L17 3.3" stroke="#2a2a2a" stroke-width="3"/><path d="M3 16.7 L17 3.3" stroke="#f05a5a" stroke-width="1.5"/></svg><span style="letter-spacing:-0.57px">FSP-2_Eti Purwantari_...</span></div></div>
<div class="tile" style="left:1058px;top:492px"><div class="av" style="background:#00959f">Y</div><div class="lbl m"><svg class="mic" viewBox="0 0 24 20"><rect x="7" y="3.7" width="5.6" height="10.6" rx="2.8" fill="#f05a5a"/><rect x="7.2" y="15" width="6" height="1.6" rx=".8" fill="#f05a5a"/><path d="M3 16.7 L17 3.3" stroke="#2a2a2a" stroke-width="3"/><path d="M3 16.7 L17 3.3" stroke="#f05a5a" stroke-width="1.5"/></svg><span style="letter-spacing:-0.22px">Yatini Dama</span></div></div>
<div class="tile" style="left:62px;top:588px"><div class="big" style="letter-spacing:0.08px">Muhammad Anas</div><div class="lbl m"><svg class="mic" viewBox="0 0 24 20"><rect x="7" y="3.7" width="5.6" height="10.6" rx="2.8" fill="#f05a5a"/><rect x="7.2" y="15" width="6" height="1.6" rx=".8" fill="#f05a5a"/><path d="M3 16.7 L17 3.3" stroke="#2a2a2a" stroke-width="3"/><path d="M3 16.7 L17 3.3" stroke="#f05a5a" stroke-width="1.5"/></svg><span style="letter-spacing:0.04px">Muhammad Anas</span></div></div>
<div class="tile" style="left:228px;top:588px"><svg class="ph" viewBox="0 0 80 80" width="80" height="80"><defs><filter id="b6" x="-10%" y="-10%" width="120%" height="120%"><feGaussianBlur stdDeviation="1.1"/></filter><clipPath id="c6"><rect width="80" height="80"/></clipPath></defs><g clip-path="url(#c6)"><g filter="url(#b6)">
<rect x="-5" y="-5" width="90" height="90" fill="#f2f2f0"/>
<path d="M55 22 L85 20 L85 42 L55 42 Z" fill="#5cb6de"/>
<path d="M55 32 C65 30 75 34 85 38 L85 62 L55 62 Z" fill="#6caa55"/>
<path d="M58 42 C66 46 72 50 80 52 L80 58 L58 52 Z" fill="#d9dde0"/>
<rect x="0" y="6" width="3" height="30" fill="#e6c44a"/>
<path d="M8 12 L20 16 L18 30 L8 32 Z" fill="#6ab0d8"/>
<rect x="2" y="20" width="5" height="8" fill="#d94b45"/>
<path d="M16 32 C16 14 27 5 39 5 C52 5 58 14 60 30 L62 52 L16 52 Z" fill="#a9a08c"/>
<ellipse cx="40" cy="45" rx="18" ry="21" fill="#c99a7e"/>
<path d="M22 30 C26 22 34 18 40 18 C48 18 54 22 58 30 C52 26 46 25 40 25 C34 25 28 26 22 30 Z" fill="#a9a08c"/>
<rect x="23" y="33" width="15" height="8" rx="3" fill="#9a8070" stroke="#1e1e1e" stroke-width="1.6"/>
<rect x="42" y="33" width="15" height="8" rx="3" fill="#9a8070" stroke="#1e1e1e" stroke-width="1.6"/>
<ellipse cx="40" cy="54" rx="6" ry="2" fill="#a86f62"/>
<ellipse cx="12" cy="40" rx="13" ry="6" fill="#c9987c"/>
<path d="M-5 60 C10 54 22 58 40 64 C58 58 72 56 85 60 L85 85 L-5 85 Z" fill="#bcb3a0"/>
</g></g></svg><div class="lbl m"><svg class="mic" viewBox="0 0 24 20"><rect x="7" y="3.7" width="5.6" height="10.6" rx="2.8" fill="#f05a5a"/><rect x="7.2" y="15" width="6" height="1.6" rx=".8" fill="#f05a5a"/><path d="M3 16.7 L17 3.3" stroke="#2a2a2a" stroke-width="3"/><path d="M3 16.7 L17 3.3" stroke="#f05a5a" stroke-width="1.5"/></svg><span style="letter-spacing:0.02px">fatih mufliha</span></div></div>
<div class="tile" style="left:394px;top:588px"><div class="big" style="letter-spacing:-0.28px">RA Darus Sa&#x27;adah</div><div class="lbl m"><svg class="mic" viewBox="0 0 24 20"><rect x="7" y="3.7" width="5.6" height="10.6" rx="2.8" fill="#f05a5a"/><rect x="7.2" y="15" width="6" height="1.6" rx=".8" fill="#f05a5a"/><path d="M3 16.7 L17 3.3" stroke="#2a2a2a" stroke-width="3"/><path d="M3 16.7 L17 3.3" stroke="#f05a5a" stroke-width="1.5"/></svg><span style="letter-spacing:-0.19px">RA Darus Sa&#x27;adah</span></div></div>
<div class="tile" style="left:560px;top:588px"><div class="big" style="letter-spacing:-0.39px">Ernis  Subekti,  S....</div><div class="lbl m"><svg class="mic" viewBox="0 0 24 20"><rect x="7" y="3.7" width="5.6" height="10.6" rx="2.8" fill="#f05a5a"/><rect x="7.2" y="15" width="6" height="1.6" rx=".8" fill="#f05a5a"/><path d="M3 16.7 L17 3.3" stroke="#2a2a2a" stroke-width="3"/><path d="M3 16.7 L17 3.3" stroke="#f05a5a" stroke-width="1.5"/></svg><span style="letter-spacing:-0.35px">Ernis Subekti, S.Pd</span></div></div>
<div class="tile" style="left:726px;top:588px"><svg class="ph" viewBox="0 0 80 80" width="80" height="80"><defs><filter id="b7" x="-10%" y="-10%" width="120%" height="120%"><feGaussianBlur stdDeviation="1.1"/></filter><clipPath id="c7"><rect width="80" height="80"/></clipPath></defs><g clip-path="url(#c7)"><g filter="url(#b7)">
<rect x="-5" y="-5" width="90" height="90" fill="#9c0c10"/>
<path d="M22 70 C20 55 20 40 22 28 C24 12 31 4 40 4 C50 4 57 12 59 28 C61 40 61 55 58 70 Z" fill="#e6e8ed"/>
<ellipse cx="40" cy="36" rx="13" ry="17" fill="#d9ad97"/>
<path d="M27 28 C29 18 35 14 40 14 C46 14 52 18 54 28 C50 22 45 20 40 20 C35 20 30 22 27 28 Z" fill="#dfe2e8"/>
<ellipse cx="34" cy="34" rx="2.8" ry="1.2" fill="#3a2824"/><ellipse cx="46" cy="34" rx="2.8" ry="1.2" fill="#3a2824"/>
<ellipse cx="40" cy="46" rx="4" ry="1.3" fill="#b5685f"/>
<path d="M31 56 L49 56 L52 80 L28 80 Z" fill="#e3e6ec"/>
<path d="M-5 85 L-5 74 C8 67 20 64 30 68 L40 80 L50 68 C60 64 72 67 85 74 L85 85 Z" fill="#79ba4a"/>
</g></g></svg><div class="lbl"><span style="letter-spacing:-0.00px">Nanda Rizqy Noviyani</span></div></div>
<div class="tile" style="left:892px;top:588px"><svg class="ph" viewBox="0 0 80 80" width="80" height="80"><defs><filter id="b8" x="-10%" y="-10%" width="120%" height="120%"><feGaussianBlur stdDeviation="1.1"/></filter><clipPath id="c8"><rect width="80" height="80"/></clipPath></defs><g clip-path="url(#c8)"><g filter="url(#b8)">
<rect x="-5" y="-5" width="90" height="90" fill="#ecebec"/>
<rect x="-5" y="8" width="90" height="1" fill="#d8d6d8"/><rect x="-5" y="16" width="90" height="1" fill="#d8d6d8"/><rect x="-5" y="24" width="90" height="1" fill="#d8d6d8"/>
<rect x="-5" y="32" width="90" height="20" rx="4" fill="#c42227"/>
<rect x="-5" y="48" width="90" height="37" fill="#d12a2d"/>
<path d="M40 85 C38 62 38 42 42 30 C44 14 48 4 55 4 C63 4 65 14 64 24 C72 34 74 56 72 85 Z" fill="#e5393a"/>
<ellipse cx="55" cy="17" rx="5" ry="6" fill="#d9a28a"/>
<ellipse cx="32" cy="33" rx="4" ry="5" fill="#6a3e2c"/><ellipse cx="33" cy="35" rx="3" ry="3.5" fill="#d4a085"/>
<path d="M22 64 L27 41 C30 38 36 38 39 42 L42 60 Z" fill="#e13a3c"/>
<rect x="22" y="62" width="3" height="14" fill="#d4a085"/>
</g></g></svg><div class="lbl m"><svg class="mic" viewBox="0 0 24 20"><rect x="7" y="3.7" width="5.6" height="10.6" rx="2.8" fill="#f05a5a"/><rect x="7.2" y="15" width="6" height="1.6" rx=".8" fill="#f05a5a"/><path d="M3 16.7 L17 3.3" stroke="#2a2a2a" stroke-width="3"/><path d="M3 16.7 L17 3.3" stroke="#f05a5a" stroke-width="1.5"/></svg><span style="letter-spacing:-0.12px">chusnul anggun</span></div></div>
<div class="tile" style="left:1058px;top:588px"><svg class="ph" viewBox="0 0 80 80" width="80" height="80"><defs><filter id="b9" x="-10%" y="-10%" width="120%" height="120%"><feGaussianBlur stdDeviation="1.1"/></filter><clipPath id="c9"><rect width="80" height="80"/></clipPath></defs><g clip-path="url(#c9)"><g filter="url(#b9)">
<rect x="-5" y="-5" width="90" height="90" fill="#d8d7d1"/>
<rect x="55" y="-5" width="30" height="90" fill="#e2e1dc"/>
<path d="M4 85 C6 62 12 48 26 44 L54 44 C66 48 72 62 76 85 Z" fill="#eed22f"/>
<path d="M33 44 L47 44 L44 70 L36 70 Z" fill="#121213"/>
<path d="M30 34 C28 20 30 8 40 6 C50 5 53 16 52 34 C50 42 46 46 40 46 C34 46 31 42 30 34 Z" fill="#151517"/>
<ellipse cx="41" cy="25" rx="8" ry="10" fill="#d09a80"/>
<path d="M31 16 C33 8 38 5 42 5 C48 5 52 9 52 16 C48 12 44 11 41 11 C37 11 34 12 31 16 Z" fill="#3d3e4a"/>
<ellipse cx="41" cy="31" rx="3" ry="1.2" fill="#b56470"/>
<path d="M26 44 L34 50 L30 80 L20 80 Z M54 44 L46 50 L50 80 L60 80 Z" fill="#e2c427"/>
<ellipse cx="61" cy="57" rx="2" ry="3" fill="#5b8bc6"/>
</g></g></svg><div class="lbl"><span style="letter-spacing:-0.12px">Nur Saijah</span></div></div>
<div class="tile" style="left:62px;top:684px"><svg class="ph" viewBox="0 0 80 80" width="80" height="80"><defs><filter id="b10" x="-10%" y="-10%" width="120%" height="120%"><feGaussianBlur stdDeviation="0.9"/></filter><clipPath id="c10"><rect width="80" height="80"/></clipPath></defs><g clip-path="url(#c10)"><g filter="url(#b10)">
<rect x="-5" y="-5" width="90" height="90" fill="#c2c4c2"/>
<rect x="60" y="-5" width="25" height="40" fill="#aeb0ae"/>
<path d="M-5 12 C10 2 34 0 52 4 C62 6 68 2 74 6 L72 11 C64 12 56 12 52 16 C60 26 70 36 80 44 L78 48 C64 40 52 30 46 22 C38 20 28 24 20 28 L12 34 L8 30 L-5 26 Z" fill="#ececec"/>
<rect x="-5" y="34" width="90" height="51" fill="#3b5740"/>
<ellipse cx="24" cy="52" rx="12" ry="14" fill="#d39e76"/>
<ellipse cx="23" cy="39" rx="11" ry="5" fill="#1d1b1a"/>
<path d="M18 58 C22 61 28 61 31 58 L30 61 C26 63 22 63 19 61 Z" fill="#f5f0ea"/>
<rect x="-5" y="66" width="40" height="20" fill="#efefef"/>
<ellipse cx="45" cy="57" rx="6" ry="8" fill="#d8a486"/>
<ellipse cx="45" cy="49" rx="6" ry="3" fill="#2a2420"/>
<path d="M34 85 L35 66 L56 66 L58 85 Z" fill="#2b3b5d"/>
<path d="M38 70 L54 70 L52 76 L40 76 Z" fill="#d9702e"/>
<path d="M51 62 C51 44 56 36 62 36 C69 36 73 44 73 62 L76 85 L50 85 Z" fill="#223563"/>
<ellipse cx="62" cy="53" rx="6" ry="8" fill="#e2ad8f"/>
<rect x="68" y="66" width="12" height="19" fill="#c54252"/>
</g></g></svg><div class="lbl m f"><svg class="mic" viewBox="0 0 24 20"><rect x="7" y="3.7" width="5.6" height="10.6" rx="2.8" fill="#f05a5a"/><rect x="7.2" y="15" width="6" height="1.6" rx=".8" fill="#f05a5a"/><path d="M3 16.7 L17 3.3" stroke="#2a2a2a" stroke-width="3"/><path d="M3 16.7 L17 3.3" stroke="#f05a5a" stroke-width="1.5"/></svg><span style="letter-spacing:-0.18px">Agustina Budian Kurn...</span></div></div>
<div class="tile" style="left:228px;top:684px"><svg class="ph" viewBox="0 0 80 80" width="80" height="80"><defs><filter id="b11" x="-10%" y="-10%" width="120%" height="120%"><feGaussianBlur stdDeviation="0.7"/></filter><clipPath id="c11"><rect width="80" height="80"/></clipPath></defs><g clip-path="url(#c11)"><g filter="url(#b11)">
<rect x="-5" y="-5" width="90" height="90" fill="#000"/>
<rect x="13" y="12" width="54" height="54" fill="#e8eaec"/>
<rect x="14" y="20" width="30" height="46" fill="#d6d2cc"/>
<circle cx="20" cy="18" r="3" fill="#c7643a"/><circle cx="62" cy="17" r="3" fill="#c7643a"/>
<rect x="58" y="18" width="8" height="14" fill="#d8d4ce"/>
<rect x="16" y="22" width="26" height="5" fill="#b9b3ab"/>
<rect x="18" y="30" width="22" height="2" fill="#8a857e"/>
<rect x="22" y="38" width="4" height="16" fill="#454343"/><rect x="30" y="38" width="4" height="16" fill="#454343"/>
<path d="M38 40 L67 30 L67 40 L38 46 Z" fill="#b25a45"/>
<path d="M13 48 L67 44 L67 50 L13 52 Z" fill="#ad5443"/>
<rect x="13" y="52" width="54" height="10" fill="#8d8a84"/>
<rect x="18" y="54" width="3" height="8" fill="#3b3a38"/><rect x="30" y="54" width="3" height="8" fill="#3b3a38"/><rect x="44" y="54" width="3" height="8" fill="#3b3a38"/><rect x="56" y="54" width="3" height="8" fill="#3b3a38"/>
<rect x="13" y="62" width="54" height="4" fill="#dad6cf"/>
</g></g></svg><div class="lbl m"><svg class="mic" viewBox="0 0 24 20"><rect x="7" y="3.7" width="5.6" height="10.6" rx="2.8" fill="#f05a5a"/><rect x="7.2" y="15" width="6" height="1.6" rx=".8" fill="#f05a5a"/><path d="M3 16.7 L17 3.3" stroke="#2a2a2a" stroke-width="3"/><path d="M3 16.7 L17 3.3" stroke="#f05a5a" stroke-width="1.5"/></svg><span style="letter-spacing:-0.29px">RA Aisyah</span></div></div>
<div class="tile" style="left:394px;top:684px"><div class="av" style="background:#7e57c2">W</div><div class="lbl"><span style="letter-spacing:0.14px">wida rini</span></div></div>
<div class="tile" style="left:560px;top:684px"><div class="big" style="letter-spacing:-0.83px">Asus</div><div class="lbl"><span style="letter-spacing:0.16px">Connecting to audio</span><svg style="display:inline-block;vertical-align:top;margin:6px 0 0 8px" width="11" height="9" viewBox="0 0 11 9"><path d="M1 4.5 L4 7.5 L10 1" stroke="#fff" stroke-width="1.3" fill="none"/></svg></div></div>
<div class="tile" style="left:726px;top:684px"><div class="big" style="letter-spacing:-1.45px">Ekoss</div><div class="lbl m"><svg class="mic" viewBox="0 0 24 20"><rect x="7" y="3.7" width="5.6" height="10.6" rx="2.8" fill="#f05a5a"/><rect x="7.2" y="15" width="6" height="1.6" rx=".8" fill="#f05a5a"/><path d="M3 16.7 L17 3.3" stroke="#2a2a2a" stroke-width="3"/><path d="M3 16.7 L17 3.3" stroke="#f05a5a" stroke-width="1.5"/></svg><span style="letter-spacing:-0.80px">Ekoss</span></div></div>
<div class="tile" style="left:892px;top:684px"><div class="big" style="letter-spacing:-0.26px">Musa&#x27;adah, S. Pd</div><div class="lbl"><span style="letter-spacing:0.16px">Connecting to audio</span><svg style="display:inline-block;vertical-align:top;margin:6px 0 0 8px" width="11" height="9" viewBox="0 0 11 9"><path d="M1 4.5 L4 7.5 L10 1" stroke="#fff" stroke-width="1.3" fill="none"/></svg></div></div>
<div class="tile" style="left:1058px;top:684px"><div class="big" style="letter-spacing:0.13px">Tri murdiyanti</div><div class="lbl"><span style="letter-spacing:0.01px">Tri murdiyanti</span></div></div>
<svg class="a" style="left:36px;top:810px" width="24" height="28" viewBox="0 0 24 28"><rect x="6" y="4" width="8" height="14" rx="4" fill="#a6a6a6"/><path d="M3.5 12.5 C3.5 17.5 6 20 10 20 C14 20 16.5 17.5 16.5 12.5" stroke="#a6a6a6" stroke-width="1.8" fill="none"/><path d="M10 20 V25.5 M6 25.8 H14" stroke="#a6a6a6" stroke-width="1.8"/><circle cx="17" cy="7" r="6" fill="#e0262b"/><rect x="16.1" y="3" width="1.8" height="5" rx=".9" fill="#fff"/><circle cx="17" cy="10" r="1" fill="#fff"/></svg>
<div class="tb" style="left:-24px;top:840px;width:140px;line-height:15px;color:#d2d2d2">Audio</div>
<svg class="a" style="left:74px;top:821px" width="9" height="6" viewBox="0 0 9 6"><path d="M1 5 L4.5 1.5 L8 5" stroke="#c8c8c8" stroke-width="1.4" fill="none"/></svg>
<svg class="a" style="left:126px;top:811px" width="26" height="26" viewBox="0 0 26 26"><rect x="1" y="6" width="15.5" height="14" rx="3" fill="#a6a6a6"/><path d="M17.5 10.5 L25 6.5 V19.5 L17.5 15.5 Z" fill="#a6a6a6"/><path d="M1.5 24.5 L24.5 1" stroke="#e85555" stroke-width="1.7"/></svg>
<div class="tb" style="left:68px;top:840px;width:140px;line-height:15px;color:#d2d2d2">Start Video</div>
<svg class="a" style="left:172px;top:821px" width="9" height="6" viewBox="0 0 9 6"><path d="M1 5 L4.5 1.5 L8 5" stroke="#c8c8c8" stroke-width="1.4" fill="none"/></svg>
<svg class="a" style="left:227px;top:813px" width="20" height="22" viewBox="0 0 20 22"><path d="M10 1 L18.5 4 V10 C18.5 15.5 15 19 10 21 C5 19 1.5 15.5 1.5 10 V4 Z" fill="#a6a6a6"/><path d="M10 3 L16.8 5.3 V10.5 H10 Z" fill="#1a1a1a"/><path d="M10 10.5 H3.2 C3.5 14.8 6.2 17.6 10 19.1 Z" fill="#1a1a1a"/></svg>
<div class="tb" style="left:166px;top:840px;width:140px;line-height:15px;color:#d2d2d2">Security</div>
<svg class="a" style="left:329px;top:814px" width="26" height="20" viewBox="0 0 26 20"><circle cx="8.5" cy="5.5" r="4.5" fill="#a6a6a6"/><circle cx="18" cy="7.5" r="3.7" fill="#a6a6a6"/><path d="M0.5 19.5 C0.5 14 4 12 8.5 12 C13 12 16.5 14 16.5 19.5 Z" fill="#a6a6a6"/><path d="M14.5 13.5 C15.5 13 16.6 12.8 18 12.8 C22 12.8 25 14.5 25 19.5 H17.5 C17.5 16.5 16.5 14.8 14.5 13.5 Z" fill="#a6a6a6"/></svg>
<div class="a" style="left:358px;top:814px;font-size:12.5px;line-height:15px;color:#d2d2d2">217</div>
<div class="tb" style="left:272px;top:840px;width:140px;line-height:15px;color:#d2d2d2">Participants</div>
<svg class="a" style="left:391px;top:821px" width="9" height="6" viewBox="0 0 9 6"><path d="M1 5 L4.5 1.5 L8 5" stroke="#c8c8c8" stroke-width="1.4" fill="none"/></svg>
<svg class="a" style="left:441px;top:809px" width="32" height="26" viewBox="0 0 32 26"><path d="M4 7 H19 C21 7 22 8 22 10 V19 C22 21 21 22 19 22 H10 L5.5 25 L6 22 H4 C2 22 1 21 1 19 V10 C1 8 2 7 4 7 Z" fill="#a6a6a6"/><rect x="14.5" y="1" width="15.5" height="14" rx="6.5" fill="#e0262b"/><text x="22.2" y="12.3" font-size="11.5" font-weight="bold" text-anchor="middle" fill="#fff" font-family="Liberation Sans">6</text></svg>
<div class="tb" style="left:382px;top:840px;width:140px;line-height:15px;color:#d2d2d2">Chat</div>
<svg class="a" style="left:481px;top:821px" width="9" height="6" viewBox="0 0 9 6"><path d="M1 5 L4.5 1.5 L8 5" stroke="#c8c8c8" stroke-width="1.4" fill="none"/></svg>
<svg class="a" style="left:533px;top:814px" width="26" height="20" viewBox="0 0 26 20"><rect x="1" y="1" width="24" height="18" rx="3" fill="#23d158"/><path d="M13 15 V5.5 M8.8 9.5 L13 5 L17.2 9.5" stroke="#111" stroke-width="2" fill="none"/></svg>
<div class="tb" style="left:475px;top:840px;width:140px;line-height:15px;color:#2bd15a">Share Screen</div>
<svg class="a" style="left:579px;top:821px" width="9" height="6" viewBox="0 0 9 6"><path d="M1 5 L4.5 1.5 L8 5" stroke="#c8c8c8" stroke-width="1.4" fill="none"/></svg>
<svg class="a" style="left:639px;top:811px" width="48" height="22" viewBox="0 0 48 22"><rect x="1" y="1" width="20" height="20" rx="3" fill="#a6a6a6"/><rect x="7.5" y="6.5" width="2.2" height="9" fill="#1a1a1a"/><rect x="12.3" y="6.5" width="2.2" height="9" fill="#1a1a1a"/><rect x="26" y="1" width="20" height="20" rx="3" fill="#a6a6a6"/><rect x="32.5" y="7.5" width="7" height="7" fill="#1a1a1a"/></svg>
<div class="tb" style="left:592px;top:842px;width:140px;line-height:15px;color:#d2d2d2">Pause/Stop Recording</div>
<svg class="a" style="left:769px;top:813px" width="22" height="22" viewBox="0 0 22 22" fill="#a6a6a6"><rect x="1" y="1" width="9" height="9" rx="2"/><rect x="12" y="1" width="9" height="9" rx="2"/><rect x="1" y="12" width="9" height="9" rx="2"/><rect x="12" y="12" width="9" height="9" rx="2"/></svg>
<div class="tb" style="left:710px;top:840px;width:140px;line-height:15px;color:#d2d2d2">Breakout Rooms</div>
<svg class="a" style="left:862px;top:811px" width="24" height="24" viewBox="0 0 24 24"><circle cx="10" cy="13.5" r="9" fill="#a6a6a6"/><circle cx="6.8" cy="12" r="1.2" fill="#1a1a1a"/><circle cx="13.2" cy="12" r="1.2" fill="#1a1a1a"/><path d="M5.8 15.2 C7 18 13 18 14.2 15.2" stroke="#1a1a1a" stroke-width="1.4" fill="none"/><path d="M18.5 1 V8 M15 4.5 H22" stroke="#a6a6a6" stroke-width="1.6"/></svg>
<div class="tb" style="left:801px;top:840px;width:140px;line-height:15px;color:#d2d2d2">Reactions</div>
<svg class="a" style="left:896px;top:821px" width="9" height="6" viewBox="0 0 9 6"><path d="M1 5 L4.5 1.5 L8 5" stroke="#c8c8c8" stroke-width="1.4" fill="none"/></svg>
<svg class="a" style="left:943px;top:816px" width="18" height="18" viewBox="0 0 18 18" fill="none" stroke="#a6a6a6" stroke-width="1.6"><path d="M7 1.8 H3.5 C2.5 1.8 1.8 2.5 1.8 3.5 V8"/><path d="M16.2 10 V14.5 C16.2 15.5 15.5 16.2 14.5 16.2 H10"/><circle cx="13.5" cy="4.5" r="2.5"/><circle cx="4.5" cy="13.5" r="2.5"/></svg>
<div class="tb" style="left:881px;top:840px;width:140px;line-height:15px;color:#d2d2d2">Apps</div>
<svg class="a" style="left:1030px;top:813px" width="22" height="20" viewBox="0 0 22 20" fill="none"><path d="M6 16.5 H3.5 C2.5 16.5 1.8 15.8 1.8 14.8 V3.5 C1.8 2.5 2.5 1.8 3.5 1.8 H18.5 C19.5 1.8 20.2 2.5 20.2 3.5 V13" stroke="#a6a6a6" stroke-width="1.6"/><rect x="8" y="13.5" width="13" height="4.5" rx="2" fill="#a6a6a6"/></svg>
<div class="tb" style="left:971px;top:840px;width:140px;line-height:15px;color:#d2d2d2">Whiteboards</div>
<svg class="a" style="left:1118px;top:820px" width="24" height="8" viewBox="0 0 24 8" fill="#a6a6a6"><circle cx="4" cy="4" r="2.2"/><circle cx="12" cy="4" r="2.2"/><circle cx="20" cy="4" r="2.2"/></svg>
<div class="tb" style="left:1060px;top:840px;width:140px;line-height:15px;color:#d2d2d2">More</div>
<div class="a" style="left:1207px;top:820px;width:61px;height:27px;border-radius:6px;background:#c8232c;color:#fff;font-weight:bold;font-size:12.5px;line-height:27px;text-align:center">End</div>
<div class="a" style="left:1280px;top:23px;width:320px;height:837px;background:#fff"></div>
<div class="a" style="left:1280px;top:23px;width:1px;height:837px;background:#e2e2e6"></div>
<svg class="a" style="left:1299px;top:42px" width="10" height="7" viewBox="0 0 10 7"><path d="M1 1.5 L5 5.5 L9 1.5" stroke="#6e7080" stroke-width="1.3" fill="none"/></svg>
<div class="a" style="left:1340px;top:37px;width:200px;text-align:center;font-size:12.9px;font-weight:bold;line-height:17px;color:#131619">Participants (216)</div>
<div class="a" style="left:1299px;top:77px;width:285px;height:32px;border:1px solid #c9c6dc;border-radius:8px;background:#fff"></div>
<svg class="a" style="left:1310px;top:85px" width="15" height="15" viewBox="0 0 15 15"><circle cx="6.3" cy="6.3" r="4.8" stroke="#6e7080" stroke-width="1.3" fill="none"/><path d="M9.8 9.8 L13.5 13.5" stroke="#6e7080" stroke-width="1.4"/></svg>
<div class="a" style="left:1327px;top:84px;font-size:13px;line-height:17px;color:#747487">Find a participant</div>
<div class="a" style="left:1590px;top:111px;width:8px;height:650px;border-radius:4px;background:#f1f1f5"></div>
<div class="a" style="left:1590px;top:111px;width:8px;height:48px;border-radius:4px;background:#b6b6be"></div>
<div class="a" style="left:1300px;top:122px;font-size:13.2px;font-weight:bold;line-height:17px;color:#131619">Waiting Room (1)</div>
<svg class="a" style="left:1420px;top:128px" width="10" height="7" viewBox="0 0 10 7"><path d="M1 1.5 L5 5.5 L9 1.5" stroke="#6e7080" stroke-width="1.3" fill="none"/></svg>
<div class="a" style="left:1522px;top:124px;font-size:12.6px;font-weight:bold;line-height:17px;color:#0e71eb">Message</div>
<div class="a" style="left:1302px;top:158px;width:26px;height:26px;border-radius:6px;background:#c6e2fb;color:#fff;font-size:12.5px;line-height:26px;text-align:center">OA</div>
<div class="a" style="left:1341px;top:164px;font-size:12.6px;letter-spacing:-0.38px;line-height:17px;color:#232333">OPPO A31</div>
<div class="a" style="left:1300px;top:203px;font-size:12.9px;font-weight:bold;line-height:17px;color:#131619">Joined (216)</div>
<svg class="a" style="left:1387px;top:209px" width="10" height="7" viewBox="0 0 10 7"><path d="M1 1.5 L5 5.5 L9 1.5" stroke="#6e7080" stroke-width="1.3" fill="none"/></svg>
<svg class="a" style="left:1302px;top:239px" width="26" height="26" viewBox="0 0 26 26"><path d="M3 4 C8 1.5 18 1.5 23 4 L23.5 15 C23 20 18 24.5 13 25.5 C8 24.5 3 20 2.5 15 Z" fill="#e0b646"/><path d="M4.5 5 C9 3 17 3 21.5 5 L22 14.5 C21.5 19 17.5 22.5 13 23.5 C8.5 22.5 4.5 19 4 14.5 Z" fill="#1f69b4"/><path d="M13 6 C15 9 17 11 16 14 C15.5 16 14 17 13 17 C12 17 10.5 16 10 14 C9 11 11 9 13 6 Z" fill="#e23a3a"/><path d="M6 14 C8 17 10 19 12.5 21 M20 14 C18 17 16 19 13.5 21" stroke="#f0d070" stroke-width="2" fill="none"/><path d="M6 4.2 C10 3 16 3 20 4.2" stroke="#dfe9f5" stroke-width="1.2" fill="none"/></svg>
<div class="a" style="left:1341px;top:245px;font-size:12.6px;letter-spacing:-0.22px;line-height:17px;color:#232333;white-space:pre">FPMIPATI (Host, me)</div>
<svg class="a" style="left:1511px;top:246px" width="18" height="12" viewBox="0 0 18 12"><path d="M4.5 11 C2.2 11 1 9.8 1 8.2 C1 6.6 2.3 5.6 3.8 5.8 C4.2 3 6.3 1 9 1 C11.8 1 13.6 2.8 14 5.2 C15.8 5.4 17 6.6 17 8.2 C17 9.9 15.8 11 13.8 11 Z" stroke="#8a8c99" stroke-width="1" fill="#fff"/><circle cx="8.6" cy="6.7" r="2.4" fill="#f0303a"/></svg>
<svg class="a" style="left:1535px;top:243px" width="18" height="18" viewBox="0 0 18 18" fill="none" stroke="#6e7080" stroke-width="1.1"><rect x="7" y="1.5" width="4" height="9" rx="2"/><path d="M4.6 8 C4.6 11 6.5 12.8 9 12.8 C11.5 12.8 13.4 11 13.4 8"/><path d="M9 12.8 V15.5 M7 15.8 H11"/></svg>
<svg class="a" style="left:1559px;top:243px" width="18" height="18" viewBox="0 0 18 18" fill="none" stroke="#e02828" stroke-width="1.2"><rect x="1.6" y="4.6" width="10.5" height="9" rx="2"/><path d="M12.1 8 L16.4 5.2 V12.8 L12.1 10.2"/><path d="M1 17 L16.5 2" stroke-width="1.1"/></svg>
<div class="pav" style="left:1302px;top:280px;background:#2d7dc0;font-weight:bold;font-size:13px">1N</div>
<div class="a" style="left:1341px;top:286px;font-size:12.6px;letter-spacing:0.03px;line-height:17px;color:#232333;white-space:pre">1956_Duwi  Nuvit... (Co-host)</div>
<svg class="a" style="left:1511px;top:287px" width="18" height="12" viewBox="0 0 18 12"><path d="M4.5 11 C2.2 11 1 9.8 1 8.2 C1 6.6 2.3 5.6 3.8 5.8 C4.2 3 6.3 1 9 1 C11.8 1 13.6 2.8 14 5.2 C15.8 5.4 17 6.6 17 8.2 C17 9.9 15.8 11 13.8 11 Z" stroke="#8a8c99" stroke-width="1" fill="#fff"/><circle cx="8.6" cy="6.7" r="2.4" fill="#f0303a"/></svg>
<svg class="a" style="left:1535px;top:284px" width="18" height="18" viewBox="0 0 18 18" fill="none" stroke="#6e7080" stroke-width="1.1"><rect x="7" y="1.5" width="4" height="9" rx="2"/><rect x="7" y="6" width="4" height="4.5" fill="#6e7080" stroke="none"/><path d="M4.6 8 C4.6 11 6.5 12.8 9 12.8 C11.5 12.8 13.4 11 13.4 8"/><path d="M9 12.8 V15.5 M7 15.8 H11"/></svg>
<svg class="a" style="left:1559px;top:284px" width="18" height="18" viewBox="0 0 18 18" fill="none" stroke="#6e7080" stroke-width="1.2"><rect x="1.6" y="4.6" width="10.5" height="9" rx="2"/><path d="M12.1 8 L16.4 5.2 V12.8 L12.1 10.2"/></svg>
<div class="pav" style="left:1302px;top:321px;background:#2d7dc0;font-weight:bold;font-size:13px">FK</div>
<div class="a" style="left:1341px;top:327px;font-size:12.6px;letter-spacing:0.05px;line-height:17px;color:#232333;white-space:pre">fatkhuronji Keme...  (Co-host)</div>
<svg class="a" style="left:1511px;top:328px" width="18" height="12" viewBox="0 0 18 12"><path d="M4.5 11 C2.2 11 1 9.8 1 8.2 C1 6.6 2.3 5.6 3.8 5.8 C4.2 3 6.3 1 9 1 C11.8 1 13.6 2.8 14 5.2 C15.8 5.4 17 6.6 17 8.2 C17 9.9 15.8 11 13.8 11 Z" stroke="#8a8c99" stroke-width="1" fill="#fff"/><circle cx="8.6" cy="6.7" r="2.4" fill="#f0303a"/></svg>
<svg class="a" style="left:1535px;top:325px" width="18" height="18" viewBox="0 0 18 18" fill="none" stroke="#6e7080" stroke-width="1.1"><rect x="7" y="1.5" width="4" height="9" rx="2"/><path d="M4.6 8 C4.6 11 6.5 12.8 9 12.8 C11.5 12.8 13.4 11 13.4 8"/><path d="M9 12.8 V15.5 M7 15.8 H11"/></svg>
<svg class="a" style="left:1559px;top:325px" width="18" height="18" viewBox="0 0 18 18" fill="none" stroke="#6e7080" stroke-width="1.2"><rect x="1.6" y="4.6" width="10.5" height="9" rx="2"/><path d="M12.1 8 L16.4 5.2 V12.8 L12.1 10.2"/></svg>
<div class="pav" style="left:1302px;top:362px;background:#1d9a7c;font-weight:bold;font-size:14px">A</div>
<div class="a" style="left:1341px;top:368px;font-size:12.6px;letter-spacing:0.21px;line-height:17px;color:#232333;white-space:pre">Admin (Co-host)</div>
<svg class="a" style="left:1511px;top:369px" width="18" height="12" viewBox="0 0 18 12"><path d="M4.5 11 C2.2 11 1 9.8 1 8.2 C1 6.6 2.3 5.6 3.8 5.8 C4.2 3 6.3 1 9 1 C11.8 1 13.6 2.8 14 5.2 C15.8 5.4 17 6.6 17 8.2 C17 9.9 15.8 11 13.8 11 Z" stroke="#8a8c99" stroke-width="1" fill="#fff"/><circle cx="8.6" cy="6.7" r="2.4" fill="#f0303a"/></svg>
<svg class="a" style="left:1535px;top:366px" width="18" height="18" viewBox="0 0 18 18" fill="none" stroke="#e02828" stroke-width="1"><rect x="7" y="1.5" width="4" height="9" rx="2"/><path d="M4.6 8 C4.6 11 6.5 12.8 9 12.8 C11.5 12.8 13.4 11 13.4 8"/><path d="M9 12.8 V15.5 M7 15.8 H11"/><path d="M2.5 16.5 L15.5 2" stroke-width="1.1"/></svg>
<svg class="a" style="left:1559px;top:366px" width="18" height="18" viewBox="0 0 18 18" fill="none" stroke="#e02828" stroke-width="1.2"><rect x="1.6" y="4.6" width="10.5" height="9" rx="2"/><path d="M12.1 8 L16.4 5.2 V12.8 L12.1 10.2"/><path d="M1 17 L16.5 2" stroke-width="1.1"/></svg>
<div class="pav" style="left:1302px;top:403px;background:#8e44b0;font-weight:bold;font-size:13px">NK</div>
<div class="a" style="left:1341px;top:409px;font-size:12.6px;letter-spacing:0.29px;line-height:17px;color:#232333;white-space:pre">Nur Khoiri (Co-host)</div>
<svg class="a" style="left:1511px;top:410px" width="18" height="12" viewBox="0 0 18 12"><path d="M4.5 11 C2.2 11 1 9.8 1 8.2 C1 6.6 2.3 5.6 3.8 5.8 C4.2 3 6.3 1 9 1 C11.8 1 13.6 2.8 14 5.2 C15.8 5.4 17 6.6 17 8.2 C17 9.9 15.8 11 13.8 11 Z" stroke="#8a8c99" stroke-width="1" fill="#fff"/><circle cx="8.6" cy="6.7" r="2.4" fill="#f0303a"/></svg>
<svg class="a" style="left:1535px;top:407px" width="18" height="18" viewBox="0 0 18 18" fill="none" stroke="#e02828" stroke-width="1"><rect x="7" y="1.5" width="4" height="9" rx="2"/><path d="M4.6 8 C4.6 11 6.5 12.8 9 12.8 C11.5 12.8 13.4 11 13.4 8"/><path d="M9 12.8 V15.5 M7 15.8 H11"/><path d="M2.5 16.5 L15.5 2" stroke-width="1.1"/></svg>
<svg class="a" style="left:1559px;top:407px" width="18" height="18" viewBox="0 0 18 18" fill="none" stroke="#6e7080" stroke-width="1.2"><rect x="1.6" y="4.6" width="10.5" height="9" rx="2"/><path d="M12.1 8 L16.4 5.2 V12.8 L12.1 10.2"/></svg>
<svg class="a" style="left:1302px;top:444px" width="26" height="26" viewBox="0 0 26 26"><defs><clipPath id="pcphoto1"><rect width="26" height="26" rx="6"/></clipPath><filter id="pfphoto1"><feGaussianBlur stdDeviation="0.4"/></filter></defs><g clip-path="url(#pcphoto1)"><g filter="url(#pfphoto1)"><rect width="26" height="26" fill="#8d8c90"/><rect width="26" height="4" fill="#2a2c2c"/><ellipse cx="17" cy="6" rx="3" ry="3.5" fill="#3a2e2a"/><path d="M8 12 C10 8 22 8 24 12 L22 22 L12 22 Z" fill="#1e2125"/><path d="M3 19 C3 16 10 16 12 19 L11 24 L3 24 Z" fill="#2c8a4a"/><ellipse cx="7" cy="19" rx="4" ry="2" fill="#f0f0ea"/><path d="M8 26 C10 22 20 22 22 26 Z" fill="#f4f4e8"/><circle cx="16" cy="24.5" r="1.3" fill="#2fb45a"/><path d="M25 6 L26 26 L23 26 Z" fill="#22306a"/></g></g></svg>
<div class="a" style="left:1341px;top:450px;font-size:12.6px;letter-spacing:0.44px;line-height:17px;color:#232333;white-space:pre">Abdul Mujab</div>
<svg class="a" style="left:1535px;top:448px" width="18" height="18" viewBox="0 0 18 18" fill="none" stroke="#6e7080" stroke-width="1.1"><rect x="7" y="1.5" width="4" height="9" rx="2"/><path d="M4.6 8 C4.6 11 6.5 12.8 9 12.8 C11.5 12.8 13.4 11 13.4 8"/><path d="M9 12.8 V15.5 M7 15.8 H11"/></svg>
<svg class="a" style="left:1559px;top:448px" width="18" height="18" viewBox="0 0 18 18" fill="none" stroke="#6e7080" stroke-width="1.2"><rect x="1.6" y="4.6" width="10.5" height="9" rx="2"/><path d="M12.1 8 L16.4 5.2 V12.8 L12.1 10.2"/></svg>
<div class="pav" style="left:1302px;top:485px;background:#2d7dc0;font-weight:bold;font-size:13px">AK</div>
<div class="a" style="left:1341px;top:491px;font-size:12.6px;letter-spacing:-0.60px;line-height:17px;color:#232333;white-space:pre">ABDUL KHARIS</div>
<svg class="a" style="left:1535px;top:489px" width="18" height="18" viewBox="0 0 18 18" fill="none" stroke="#e02828" stroke-width="1"><rect x="7" y="1.5" width="4" height="9" rx="2"/><path d="M4.6 8 C4.6 11 6.5 12.8 9 12.8 C11.5 12.8 13.4 11 13.4 8"/><path d="M9 12.8 V15.5 M7 15.8 H11"/><path d="M2.5 16.5 L15.5 2" stroke-width="1.1"/></svg>
<svg class="a" style="left:1559px;top:489px" width="18" height="18" viewBox="0 0 18 18" fill="none" stroke="#e02828" stroke-width="1.2"><rect x="1.6" y="4.6" width="10.5" height="9" rx="2"/><path d="M12.1 8 L16.4 5.2 V12.8 L12.1 10.2"/><path d="M1 17 L16.5 2" stroke-width="1.1"/></svg>
<div class="pav" style="left:1302px;top:526px;background:#27ae60;font-weight:bold;font-size:13px">AL</div>
<div class="a" style="left:1341px;top:532px;font-size:12.6px;letter-spacing:-0.64px;line-height:17px;color:#232333;white-space:pre">ABDUL LATIF</div>
<svg class="a" style="left:1559px;top:530px" width="18" height="18" viewBox="0 0 18 18" fill="none" stroke="#e02828" stroke-width="1"><rect x="7" y="1.5" width="4" height="9" rx="2"/><path d="M4.6 8 C4.6 11 6.5 12.8 9 12.8 C11.5 12.8 13.4 11 13.4 8"/><path d="M9 12.8 V15.5 M7 15.8 H11"/><path d="M2.5 16.5 L15.5 2" stroke-width="1.1"/></svg>
<div class="pav" style="left:1302px;top:567px;background:#8e44b0;font-weight:bold;font-size:13px">AA</div>
<div class="a" style="left:1341px;top:573px;font-size:12.6px;letter-spacing:0.14px;line-height:17px;color:#232333;white-space:pre">Adinda Aulia Nugrahani_MTs A...</div>
<svg class="a" style="left:1535px;top:571px" width="18" height="18" viewBox="0 0 18 18" fill="none" stroke="#e02828" stroke-width="1"><rect x="7" y="1.5" width="4" height="9" rx="2"/><path d="M4.6 8 C4.6 11 6.5 12.8 9 12.8 C11.5 12.8 13.4 11 13.4 8"/><path d="M9 12.8 V15.5 M7 15.8 H11"/><path d="M2.5 16.5 L15.5 2" stroke-width="1.1"/></svg>
<svg class="a" style="left:1559px;top:571px" width="18" height="18" viewBox="0 0 18 18" fill="none" stroke="#e02828" stroke-width="1.2"><rect x="1.6" y="4.6" width="10.5" height="9" rx="2"/><path d="M12.1 8 L16.4 5.2 V12.8 L12.1 10.2"/><path d="M1 17 L16.5 2" stroke-width="1.1"/></svg>
<div class="pav" style="left:1302px;top:608px;background:#5e9e33;font-weight:normal;font-size:17px">A</div>
<div class="a" style="left:1341px;top:614px;font-size:12.6px;letter-spacing:0.06px;line-height:17px;color:#232333;white-space:pre">Afiyatur Royanah</div>
<svg class="a" style="left:1535px;top:612px" width="18" height="18" viewBox="0 0 18 18" fill="none" stroke="#e02828" stroke-width="1"><rect x="7" y="1.5" width="4" height="9" rx="2"/><path d="M4.6 8 C4.6 11 6.5 12.8 9 12.8 C11.5 12.8 13.4 11 13.4 8"/><path d="M9 12.8 V15.5 M7 15.8 H11"/><path d="M2.5 16.5 L15.5 2" stroke-width="1.1"/></svg>
<svg class="a" style="left:1559px;top:612px" width="18" height="18" viewBox="0 0 18 18" fill="none" stroke="#6e7080" stroke-width="1.2"><rect x="1.6" y="4.6" width="10.5" height="9" rx="2"/><path d="M12.1 8 L16.4 5.2 V12.8 L12.1 10.2"/></svg>
<svg class="a" style="left:1302px;top:649px" width="26" height="26" viewBox="0 0 26 26"><defs><clipPath id="pcphoto2"><rect width="26" height="26" rx="6"/></clipPath><filter id="pfphoto2"><feGaussianBlur stdDeviation="0.4"/></filter></defs><g clip-path="url(#pcphoto2)"><g filter="url(#pfphoto2)"><rect width="26" height="26" fill="#e3d4b2"/><ellipse cx="13" cy="13" rx="6" ry="7.5" fill="#9a6a4e"/><path d="M6.5 9 C7 4 19 4 19.5 9 L19.5 8 C18 5 8 5 6.5 8 Z" fill="#3a3a46"/><path d="M6 8.5 C6 3.5 20 3.5 20 8.5 Z" fill="#3c3d4a"/><path d="M2 26 C3 20 8 19 13 21 C18 19 23 20 24 26 Z" fill="#f2f2f2"/><path d="M3 26 C4 21 7 20 9 21 L8 26 Z M23 26 C22 21 19 20 17 21 L18 26 Z" fill="#2a2a30"/></g></g></svg>
<div class="a" style="left:1341px;top:655px;font-size:12.6px;letter-spacing:0.03px;line-height:17px;color:#232333;white-space:pre">Afni Ernawati</div>
<svg class="a" style="left:1535px;top:653px" width="18" height="18" viewBox="0 0 18 18" fill="none" stroke="#e02828" stroke-width="1"><rect x="7" y="1.5" width="4" height="9" rx="2"/><path d="M4.6 8 C4.6 11 6.5 12.8 9 12.8 C11.5 12.8 13.4 11 13.4 8"/><path d="M9 12.8 V15.5 M7 15.8 H11"/><path d="M2.5 16.5 L15.5 2" stroke-width="1.1"/></svg>
<svg class="a" style="left:1559px;top:653px" width="18" height="18" viewBox="0 0 18 18" fill="none" stroke="#6e7080" stroke-width="1.2"><rect x="1.6" y="4.6" width="10.5" height="9" rx="2"/><path d="M12.1 8 L16.4 5.2 V12.8 L12.1 10.2"/></svg>
<svg class="a" style="left:1302px;top:690px" width="26" height="26" viewBox="0 0 26 26"><defs><clipPath id="pcphoto3"><rect width="26" height="26" rx="6"/></clipPath><filter id="pfphoto3"><feGaussianBlur stdDeviation="0.4"/></filter></defs><g clip-path="url(#pcphoto3)"><g filter="url(#pfphoto3)"><rect width="26" height="26" fill="#9fa3a0"/><path d="M0 0 H26 V8 C18 5 8 5 0 9 Z" fill="#eaeaea"/><rect y="10" width="26" height="16" fill="#2f4a34"/><ellipse cx="8" cy="16" rx="4.5" ry="5.5" fill="#cf9a72"/><ellipse cx="8" cy="11" rx="4" ry="2" fill="#1b1a1a"/><rect y="21" width="12" height="5" fill="#f0f0f0"/><ellipse cx="15" cy="18" rx="2.5" ry="3" fill="#d4a081"/><ellipse cx="20.5" cy="16" rx="4" ry="5" fill="#223563"/><ellipse cx="20.5" cy="17.5" rx="2.5" ry="3" fill="#e0ab8d"/><path d="M12 26 L13 22 L25 21 L26 26 Z" fill="#263a66"/></g></g></svg>
<div class="a" style="left:1341px;top:696px;font-size:12.6px;letter-spacing:0.00px;line-height:17px;color:#232333;white-space:pre">Agustina Budian Kurniati_MTs I...</div>
<svg class="a" style="left:1535px;top:694px" width="18" height="18" viewBox="0 0 18 18" fill="none" stroke="#e02828" stroke-width="1"><rect x="7" y="1.5" width="4" height="9" rx="2"/><path d="M4.6 8 C4.6 11 6.5 12.8 9 12.8 C11.5 12.8 13.4 11 13.4 8"/><path d="M9 12.8 V15.5 M7 15.8 H11"/><path d="M2.5 16.5 L15.5 2" stroke-width="1.1"/></svg>
<svg class="a" style="left:1559px;top:694px" width="18" height="18" viewBox="0 0 18 18" fill="none" stroke="#e02828" stroke-width="1.2"><rect x="1.6" y="4.6" width="10.5" height="9" rx="2"/><path d="M12.1 8 L16.4 5.2 V12.8 L12.1 10.2"/><path d="M1 17 L16.5 2" stroke-width="1.1"/></svg>
<div class="pav" style="left:1302px;top:731px;background:#148878;font-weight:normal;font-size:17px">a</div>
<div class="a" style="left:1341px;top:737px;font-size:12.6px;letter-spacing:0.11px;line-height:17px;color:#232333;white-space:pre">ahmad Bisyri</div>
<svg class="a" style="left:1535px;top:735px" width="18" height="18" viewBox="0 0 18 18" fill="none" stroke="#e02828" stroke-width="1"><rect x="7" y="1.5" width="4" height="9" rx="2"/><path d="M4.6 8 C4.6 11 6.5 12.8 9 12.8 C11.5 12.8 13.4 11 13.4 8"/><path d="M9 12.8 V15.5 M7 15.8 H11"/><path d="M2.5 16.5 L15.5 2" stroke-width="1.1"/></svg>
<svg class="a" style="left:1559px;top:735px" width="18" height="18" viewBox="0 0 18 18" fill="none" stroke="#e02828" stroke-width="1.2"><rect x="1.6" y="4.6" width="10.5" height="9" rx="2"/><path d="M12.1 8 L16.4 5.2 V12.8 L12.1 10.2"/><path d="M1 17 L16.5 2" stroke-width="1.1"/></svg>
<div class="a" style="left:1324px;top:779px;width:53px;height:23px;border:1px solid #8a8c99;border-radius:6px;background:#fff;color:#232333;font-size:12.2px;line-height:21px;text-align:center">Invite</div>
<div class="a" style="left:1420px;top:779px;width:71px;height:23px;border:1px solid #8a8c99;border-radius:6px;background:#fff;color:#232333;font-size:12.2px;line-height:21px;text-align:center">Mute All</div>
<div class="a" style="left:1534px;top:779px;width:23px;height:23px;border:1px solid #8a8c99;border-radius:6px;background:#fff;color:#232333;font-size:12.2px;line-height:21px;text-align:center"><span style="position:relative;top:-3px;letter-spacing:0.5px;font-weight:bold">...</span></div>
<div class="a" style="left:1280px;top:816px;width:320px;height:1px;background:#ececf0"></div>
<svg class="a" style="left:1299px;top:834px" width="10" height="7" viewBox="0 0 10 7"><path d="M1 1.5 L5 5.5 L9 1.5" stroke="#6e7080" stroke-width="1.3" fill="none"/></svg>
<div class="a" style="left:1340px;top:830px;width:200px;text-align:center;font-size:13px;font-weight:bold;line-height:17px;color:#131619">Chat</div>
<div class="a" style="left:0;top:860px;width:1600px;height:40px;background:linear-gradient(90deg,#233a44 0%,#20343f 40%,#1f3244 65%,#1c2b45 100%)"></div>
<svg class="a" style="left:16px;top:872px" width="16" height="16" viewBox="0 0 16 16"><path d="M0 2.3 L6.6 1.4 V7.6 H0 Z M7.4 1.3 L16 0 V7.6 H7.4 Z M0 8.4 H6.6 V14.6 L0 13.7 Z M7.4 8.4 H16 V16 L7.4 14.7 Z" fill="#fff"/></svg>
<svg class="a" style="left:63px;top:871px" width="17" height="17" viewBox="0 0 17 17"><circle cx="10.5" cy="6.5" r="5" stroke="#fff" stroke-width="1.4" fill="none"/><path d="M7 10 L1.2 15.8" stroke="#fff" stroke-width="1.6"/></svg>
<div class="a" style="left:103px;top:860px;width:40px;height:40px;background:rgba(255,255,255,0.0)"></div>
<svg class="a" style="left:111px;top:869px" width="23" height="22" viewBox="0 0 23 22"><path d="M1 2 H8 L10 4 H22 V20 H1 Z" fill="#e9a91f"/><rect x="1" y="5" width="21" height="15" fill="#fcd462"/><path d="M6 20 V12 H17 V20 H13 V16 H10 V20 Z" fill="#3d97e6"/></svg>
<svg class="a" style="left:160px;top:868px" width="26" height="25" viewBox="0 0 26 25"><circle cx="11" cy="11" r="10.5" fill="#2ea44f"/><path d="M11 0.5 A10.5 10.5 0 0 1 20.1 5.75 L11 5.75 Z M11 0.5 A10.5 10.5 0 0 0 1.9 5.75 L6.5 13.6 Z" fill="#e33b2e"/><path d="M20.1 5.75 A10.5 10.5 0 0 1 11 21.5 L15.5 13.6 Z" fill="#f6c02c"/><circle cx="11" cy="11" r="5" fill="#fff"/><circle cx="11" cy="11" r="3.8" fill="#3b78e7"/><circle cx="18" cy="17" r="7" fill="#d9e7ea"/><path d="M13 17 H23" stroke="#d55" stroke-width=".6"/><circle cx="18" cy="14" r="1.2" fill="#6b4a3a"/></svg>
<svg class="a" style="left:208px;top:868px" width="24" height="24" viewBox="0 0 24 24"><defs><linearGradient id="ffg" x1="0.2" y1="0" x2="0.6" y2="1"><stop offset="0" stop-color="#ffe03a"/><stop offset=".45" stop-color="#ff7a2a"/><stop offset="1" stop-color="#e6206a"/></linearGradient></defs><path d="M12 23.5 C5.5 23.5 1 18.5 1 13 C1 9.5 2.5 7 4 5.5 C4 7.5 4.5 8.5 5.5 9 C6.5 6 9 3.5 12 3 C11.5 4.5 12 5.5 13 6 C14 3.5 16 1.5 17.5 0.5 C17 2.5 17.5 4 19 5.5 C21.5 8 23 10.5 23 13.5 C23 19 18.5 23.5 12 23.5 Z" fill="url(#ffg)"/><circle cx="12.5" cy="13" r="5.2" fill="#7b3fe4"/><path d="M6 11.5 C8 8.5 12 8 14.5 9.5 C12.5 10 11 11.5 11.5 13.5 C9.5 12.5 7.5 12 6 11.5 Z" fill="#ff9a3c"/></svg>
<svg class="a" style="left:258px;top:868px" width="24" height="24" viewBox="0 0 24 24"><defs><linearGradient id="edg" x1="0" y1="1" x2="1" y2="0"><stop offset="0" stop-color="#0b63c1"/><stop offset=".55" stop-color="#2fa4e6"/><stop offset="1" stop-color="#5fd35c"/></linearGradient></defs><circle cx="12" cy="12" r="11.5" fill="url(#edg)"/><path d="M1 13 C1 20 6 23.5 12 23.5 C15 23.5 17.5 22.5 19 21 C14 22 9 19 9 15 C9 12 11 10.5 13 10.5 C10 8 3 9 1 13 Z" fill="#0d4f9c"/><path d="M11 15.5 C13 18 18 18.5 22.5 15.5 C21.5 18 19 20.5 17 21 C14 21 11.5 18.5 11 15.5 Z" fill="#0d4f9c"/></svg>
<svg class="a" style="left:307px;top:868px" width="24" height="24" viewBox="0 0 24 24"><rect x="0" y="3.7" width="24" height="16.5" rx="4" fill="#ff0000"/><path d="M9.5 8 L16 12 L9.5 16 Z" fill="#fff"/></svg>
<svg class="a" style="left:356px;top:868px" width="24" height="24" viewBox="0 0 24 24"><defs><linearGradient id="ig" x1="0" y1="1" x2="1" y2="0"><stop offset="0" stop-color="#feda75"/><stop offset=".35" stop-color="#fa7e1e"/><stop offset=".6" stop-color="#d62976"/><stop offset="1" stop-color="#4f5bd5"/></linearGradient></defs><rect x="0" y="0" width="24" height="24" rx="6" fill="url(#ig)"/><rect x="4" y="4" width="16" height="16" rx="4.5" stroke="#fff" stroke-width="1.8" fill="none"/><circle cx="12" cy="12" r="3.8" stroke="#fff" stroke-width="1.8" fill="none"/><circle cx="16.8" cy="7.2" r="1.1" fill="#fff"/></svg>
<svg class="a" style="left:405px;top:868px" width="24" height="24" viewBox="0 0 24 24"><path d="M12 0.5 C18.5 0.5 23.5 5.5 23.5 12 C23.5 18.5 18.5 23.5 12 23.5 C10 23.5 8 23 6.3 22 L0.5 23.5 L2 18 C1 16.3 0.5 14.2 0.5 12 C0.5 5.5 5.5 0.5 12 0.5 Z" fill="#fff"/><circle cx="12" cy="12" r="9.6" fill="#3fc350"/><path d="M8.5 6.5 C7.5 7 7 8 7.2 9.5 C7.8 12.5 11 16 14.5 16.8 C16 17 17 16.3 17.2 15.3 L15.2 14 L14 15 C12 14.3 10 12.3 9.3 10.3 L10.3 9 L9 6.6 Z" fill="#fff"/></svg>
<svg class="a" style="left:454px;top:868px" width="24" height="24" viewBox="0 0 24 24"><rect x="0" y="0" width="24" height="24" fill="#1d9bf0"/><path d="M18.5 7.8 C18 8 17.5 8.2 17 8.2 C17.5 7.9 17.9 7.4 18.1 6.8 C17.6 7.1 17 7.3 16.5 7.4 C15.5 6.3 13.7 6.3 12.7 7.4 C12 8 11.8 9 12 9.8 C10 9.7 8.2 8.8 6.9 7.2 C6.2 8.4 6.6 9.9 7.7 10.6 C7.3 10.6 6.9 10.5 6.6 10.3 C6.6 11.6 7.5 12.6 8.7 12.9 C8.3 13 7.9 13 7.5 12.9 C7.9 14 8.9 14.7 10 14.7 C9 15.5 7.6 15.9 6.3 15.7 C11.5 19 18.3 15.6 18 9 C18.5 8.7 18.5 8.2 18.5 7.8 Z" fill="#fff"/></svg>
<svg class="a" style="left:503px;top:868px" width="24" height="24" viewBox="0 0 24 24"><rect x="0" y="0" width="24" height="24" fill="#0a4fe6"/><g fill="#fff"><rect x="3" y="4" width="7" height="1.3"/><rect x="3" y="7.5" width="7" height="1.3"/><rect x="13" y="3" width="8" height="9" rx="1"/><rect x="4" y="13" width="2" height="8"/><rect x="8" y="13" width="1.5" height="8"/><path d="M17 13 L18.3 16.3 L21.5 16.5 L19 18.5 L20 21.5 L17 19.8 L14 21.5 L15 18.5 L12.5 16.5 L15.7 16.3 Z"/></g></svg>
<svg class="a" style="left:555px;top:868px" width="18" height="24" viewBox="0 0 18 24"><rect x="0" y="0" width="18" height="24" rx="1.5" fill="#7b7f84"/><rect x="2" y="2" width="14" height="4" fill="#49c6f5"/><g fill="#cfd3d6"><rect x="2" y="8" width="4" height="3.5"/><rect x="7" y="8" width="4" height="3.5"/><rect x="12" y="8" width="4" height="3.5"/><rect x="2" y="13" width="4" height="3.5"/><rect x="7" y="13" width="4" height="3.5"/><rect x="2" y="18" width="4" height="3.5"/><rect x="7" y="18" width="4" height="3.5"/></g><rect x="12" y="13" width="4" height="8.5" fill="#1d4d8e"/></svg>
<svg class="a" style="left:602px;top:868px" width="22" height="24" viewBox="0 0 22 24"><rect x="0" y="1.5" width="22" height="22" rx="2" fill="#1e8fe0"/><rect x="0" y="1.5" width="22" height="5" rx="1" fill="#0f67b5"/><rect x="4.5" y="0" width="1.6" height="4.5" fill="#6fd0f5"/><rect x="16" y="0" width="1.6" height="4.5" fill="#6fd0f5"/><g fill="#fff"><rect x="8" y="9" width="2" height="2"/><rect x="12" y="9" width="2" height="2"/><rect x="16" y="9" width="2" height="2"/><rect x="4" y="13" width="2" height="2"/><rect x="8" y="13" width="2" height="2"/><rect x="12" y="13" width="2" height="2"/><rect x="16" y="13" width="2" height="2"/><rect x="4" y="17" width="2" height="2"/><rect x="8" y="17" width="2" height="2"/><rect x="12" y="17" width="2" height="2"/></g></svg>
<svg class="a" style="left:651px;top:868px" width="22" height="21" viewBox="0 0 22 21"><rect x="1" y="1" width="20" height="19" rx="1" fill="#2a0634" stroke="#e77cf5" stroke-width="1.5"/><text x="11" y="14.6" text-anchor="middle" font-family="Liberation Sans" font-weight="bold" font-size="11" fill="#e77cf5">Pr</text></svg>
<svg class="a" style="left:700px;top:868px" width="22" height="21" viewBox="0 0 22 21"><rect x="1" y="1" width="20" height="19" rx="1" fill="#1f0a3c" stroke="#d291ff" stroke-width="1.5"/><text x="11" y="14.6" text-anchor="middle" font-family="Liberation Sans" font-weight="bold" font-size="11" fill="#d291ff">Ae</text></svg>
<svg class="a" style="left:749px;top:868px" width="22" height="21" viewBox="0 0 22 21"><rect x="1" y="1" width="20" height="19" rx="3" fill="#001e36" stroke="#31c5f4" stroke-width="1.5"/><text x="11" y="14.6" text-anchor="middle" font-family="Liberation Sans" font-weight="bold" font-size="11" fill="#d8eefb">Ps</text></svg>
<div class="a" style="left:785px;top:860px;width:48px;height:40px;background:#4b5963"></div>
<div class="a" style="left:785px;top:898px;width:48px;height:2px;background:#76b9ed"></div>
<svg class="a" style="left:797px;top:868px" width="24" height="24" viewBox="0 0 24 24"><rect x="0.5" y="0.5" width="23" height="23" rx="8" fill="#4a8cff"/><rect x="5" y="8" width="9.5" height="8" rx="2" fill="#fff"/><path d="M15 11 L19 8.5 V15.5 L15 13 Z" fill="#fff"/></svg>
<svg class="a" style="left:847px;top:869px" width="22" height="22" viewBox="0 0 22 22"><rect x="0" y="0" width="22" height="22" fill="#fdd012"/><path d="M22 11 V22 H11 Z" fill="#e8a415"/><path d="M11 22 L22 11 H13 C12 11 11 12 11 13 Z" fill="#3b3a3a"/></svg>
<svg class="a" style="left:894px;top:868px" width="24" height="24" viewBox="0 0 24 24"><path d="M0 10 C0 3 4 0 10 0 H24 V14 C24 20 20 24 14 24 H10 C4 24 0 20 0 14 Z" fill="#3bb83a"/><path d="M6 5 L17 17" stroke="#f0f0f0" stroke-width="3.5"/><path d="M17 17 L19 19" stroke="#bbb" stroke-width="2"/></svg>
<div class="a" style="left:103px;top:898px;width:40px;height:2px;background:#76b9ed"></div>
<div class="a" style="left:152px;top:898px;width:40px;height:2px;background:#76b9ed"></div>
<div class="a" style="left:201px;top:898px;width:40px;height:2px;background:#76b9ed"></div>
<div class="a" style="left:887px;top:898px;width:40px;height:2px;background:#76b9ed"></div>
<svg class="a" style="left:1416px;top:876px" width="12" height="8" viewBox="0 0 12 8"><path d="M1 7 L6 1.8 L11 7" stroke="#fff" stroke-width="1.2" fill="none"/></svg>
<svg class="a" style="left:1438px;top:874px" width="17" height="14" viewBox="0 0 17 14"><rect x="4.5" y="0.5" width="11" height="9" fill="none" stroke="#fff" stroke-width="1"/><path d="M10 9.5 V12.5 M6 12.5 H14" stroke="#fff"/><rect x="0.5" y="0.5" width="4" height="3.5" fill="#1c2b45" stroke="#fff"/><path d="M2.5 4 V12" stroke="#fff"/></svg>
<svg class="a" style="left:1462px;top:873px" width="17" height="14" viewBox="0 0 17 14"><path d="M1 4.5 H3.5 L7 1 V13 L3.5 9.5 H1 Z" stroke="#fff" stroke-width="1" fill="none"/><path d="M9 5 C10 6 10 8 9 9 M11 3.5 C12.8 5.5 12.8 8.5 11 10.5" stroke="#fff" stroke-width="1" fill="none"/><path d="M13.3 1.5 C16 4.5 16 9.5 13.3 12.5" stroke="#888" stroke-width="1" fill="none"/></svg>
<div class="a" style="left:1480px;top:863px;width:70px;text-align:center;font-size:11.4px;line-height:16px;color:#fff">13:14</div>
<div class="a" style="left:1475px;top:880px;width:80px;text-align:center;font-size:11.4px;line-height:16px;color:#fff">28-Sep-22</div>
<svg class="a" style="left:1558px;top:871px" width="25" height="24" viewBox="0 0 25 24"><path d="M1 1 H17 V12 H6 L3 15 V12 H1 Z" fill="#fff"/><path d="M4 4 H14 M4 6.5 H14 M4 9 H11" stroke="#1c2b45" stroke-width="1"/><circle cx="16.5" cy="15.5" r="7.5" fill="#2a2a2a" stroke="#666" stroke-width="1"/><text x="16.5" y="19.6" text-anchor="middle" font-family="Liberation Sans" font-size="11.5" fill="#fff">2</text></svg>
<div class="a" style="left:1595px;top:860px;width:1px;height:40px;background:#5b6a80"></div>
</body></html>
